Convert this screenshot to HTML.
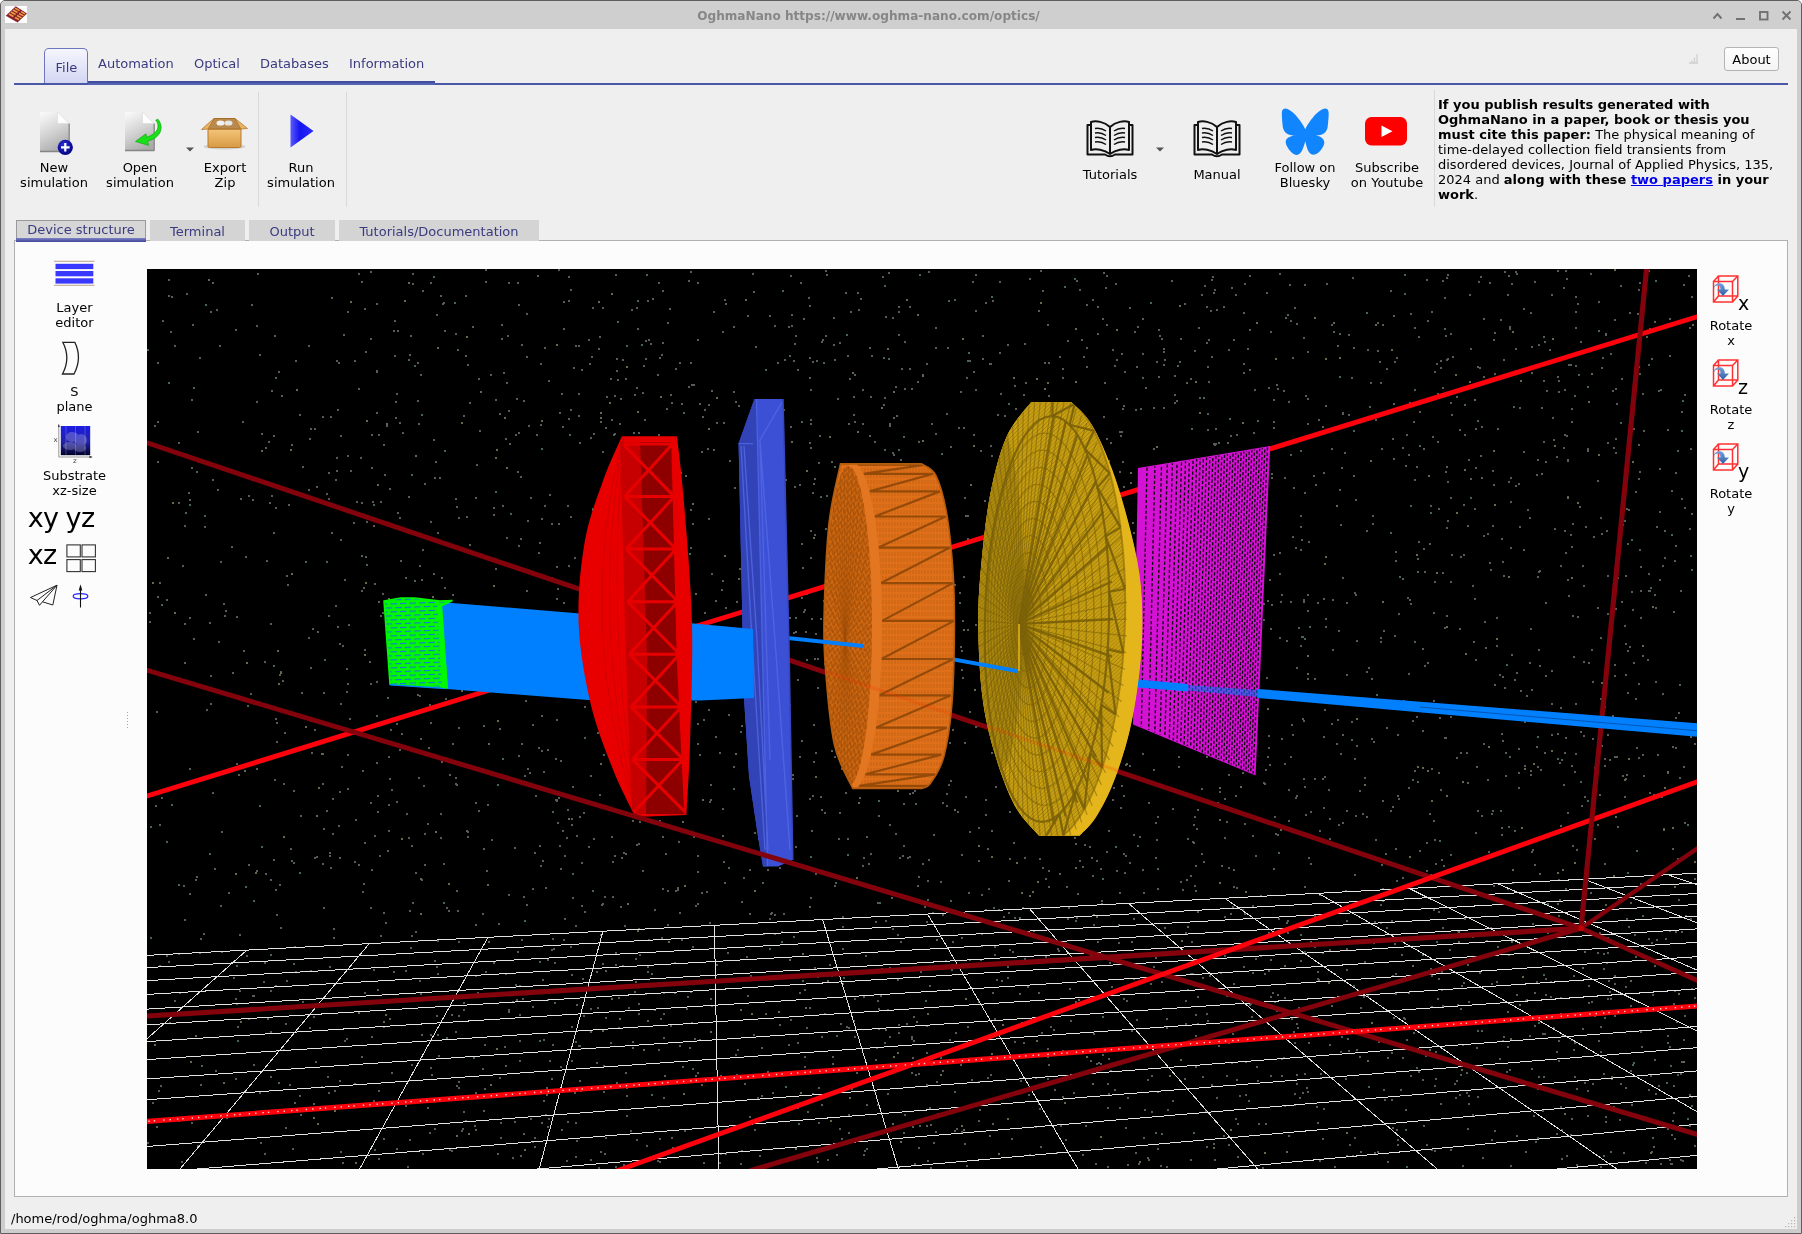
<!DOCTYPE html>
<html><head><meta charset="utf-8"><title>OghmaNano</title>
<style>
*{box-sizing:border-box;margin:0;padding:0}
html,body{width:1802px;height:1234px;overflow:hidden}html{background:#fff}
body{background:transparent;will-change:transform;font-family:"DejaVu Sans","Liberation Sans",sans-serif;font-size:13px;color:#000;position:relative}
.abs{position:absolute}
#win{position:absolute;left:0;top:0;width:1802px;height:1234px;background:#cdcdcd;border:1px solid #5e5e5e;border-radius:5px 5px 0 0}
#winin{position:absolute;left:5px;top:29px;width:1792px;height:1200px;background:#efefef}
#title{position:absolute;left:1px;top:1px;width:1800px;height:28px;background:#cfcfcf;border-radius:4px 4px 0 0;text-align:center;line-height:31px;font-weight:bold;color:#868686;font-size:12.1px;padding-right:65px}
.tab{position:absolute;top:56px;color:#3a3a80;font-size:13px;white-space:nowrap}
.tlab{position:absolute;text-align:center;font-size:13px;line-height:15px;white-space:nowrap;transform:translateX(-50%)}
.sep{position:absolute;width:1px;background:#d9d9d9}
.vtab{position:absolute;top:220px;height:21px;background:#d4d4d4;color:#3a3a80;text-align:center;line-height:23px;font-size:13px}
</style></head><body>
<div id="win"></div>
<div id="title">OghmaNano https://www.oghma-nano.com/optics/</div>
<div id="winin"></div>

<svg class="abs" style="left:5px;top:6px" width="22" height="17" viewBox="5 6 22 17"><rect x="5" y="6" width="22" height="17" fill="#fdfdfd"/><polygon points="5.800,15.700 15.700,6.200 27,13.500 17.500,22.600" fill="#8a1f2a"/><polygon points="6.500,16.500 17.300,22 17.500,22.600 5.800,15.700" fill="#b9a3a3"/><g stroke="#eaa040" stroke-width="1.500"><path d="M9,14 L13.500,16.500 M11,12 L15.500,14.500 M13,10 L17.500,12.500 M15,8.200 L19.500,10.700"/><path d="M15,17.500 L19,19.500 M17,15.500 L21.500,17.800 M19,13.500 L23.500,15.800 M21,11.700 L25,13.800"/></g></svg>
<svg class="abs" style="left:1708px;top:8px" width="90" height="16" viewBox="1708 8 90 16" fill="none" stroke="#727272" stroke-width="1.9"><path d="M1713.5,18.5 L1717.5,14 L1721.5,18.5"/><path d="M1736,19 H1745" stroke-width="2"/><rect x="1760" y="12" width="7.5" height="7.5"/><path d="M1782.5,11.5 L1790.5,19.5 M1790.5,11.5 L1782.5,19.5"/></svg>
<div class="abs" style="left:14px;top:83px;width:1774px;height:2px;background:#4b58a8"></div>
<div class="abs" style="left:88px;top:81px;width:347px;height:2px;background:#434d9e"></div><div class="abs" style="left:88px;top:83px;width:347px;height:2px;background:#5563b5"></div>
<div class="abs" style="left:44px;top:48px;width:44px;height:35px;border:1px solid #7076bc;border-bottom:none;border-radius:5px 5px 0 0;background:linear-gradient(#f6f6fd,#d3d6f3)"></div>
<div class="tab" style="left:55.5px;top:60px">File</div>
<div class="tab" style="left:98px">Automation</div>
<div class="tab" style="left:194px">Optical</div>
<div class="tab" style="left:260px">Databases</div>
<div class="tab" style="left:349px">Information</div>
<div class="abs" style="left:1724px;top:47px;width:55px;height:24px;border:1px solid #b4b4b4;border-radius:3px;background:linear-gradient(#fff,#f4f4f4);text-align:center;line-height:24px;font-size:13px">About</div>
<svg class="abs" style="left:1688px;top:53px" width="12" height="12" viewBox="0 0 12 12"><path d="M9,1 V10 M6.5,4.5 V10 M4,7.5 V10 M1,10 H10" stroke="#cfcfcf" stroke-width="1.3" fill="none"/></svg>


<svg class="abs" style="left:0;top:90px" width="1802" height="125" viewBox="0 90 1802 125">
<defs>
<linearGradient id="docg" x1="0.2" y1="0" x2="0.6" y2="1"><stop offset="0" stop-color="#f7f7f7"/><stop offset="0.5" stop-color="#d4d4d4"/><stop offset="1" stop-color="#ababab"/></linearGradient>
<linearGradient id="playg" x1="0" y1="0" x2="1" y2="0"><stop offset="0" stop-color="#5a5aff"/><stop offset="0.4" stop-color="#1515f0"/><stop offset="1" stop-color="#2a2aff"/></linearGradient>
<linearGradient id="boxg" x1="0" y1="0" x2="0" y2="1"><stop offset="0" stop-color="#f3c57a"/><stop offset="1" stop-color="#d89a45"/></linearGradient>
<radialGradient id="plusg" cx="0.4" cy="0.35" r="0.7"><stop offset="0" stop-color="#2d2dd8"/><stop offset="1" stop-color="#00007e"/></radialGradient>
</defs>
<!-- new sim -->
<path d="M40,112 H57.500 L69,123.500 V151 H40 Z" fill="url(#docg)"/><path d="M40,151.500 H69.500 M69.200,123.500 V151.500" stroke="#858585" stroke-width="1.300" fill="none"/>
<path d="M57.500,112 V123.500 H69 Z" fill="#fdfdfd" stroke="#d5d5d5" stroke-width="0.5"/>
<circle cx="65.3" cy="147.3" r="7.6" fill="url(#plusg)"/><path d="M61,147.3 H69.6 M65.3,143 V151.6" stroke="#fff" stroke-width="2.2"/>
<!-- open sim -->
<path d="M125,112 H142.500 L154,123.500 V150 H125 Z" fill="url(#docg)"/><path d="M125,150.500 H154.500 M154.200,123.500 V150.500" stroke="#858585" stroke-width="1.300" fill="none"/>
<path d="M142.500,112 V123.500 H154 Z" fill="#fdfdfd" stroke="#d5d5d5" stroke-width="0.5"/>
<path d="M155.800,120.200 C160.500,126 158,133.500 146.500,137.300 L146,133.800 L135.500,141.500 L148.500,145.300 L147.500,141.300 C162,137.500 164,126 157.800,119.200 Z" fill="#19e019" stroke="#10b010" stroke-width="0.800"/>
<path d="M186,147.5 H194 L190,151.5 Z" fill="#555"/>
<!-- export zip -->
<ellipse cx="224.5" cy="146.5" rx="21" ry="3" fill="#d0d0d0"/>
<path d="M208,129 H241 V146 Q241,147.5 239.500,147.5 H209.500 Q208,147.5 208,146 Z" fill="url(#boxg)" stroke="#b87a2c" stroke-width="1"/>
<path d="M208,129 L214,118.500 H235 L241,129 Z" fill="#b98a4e" stroke="#a86d24" stroke-width="1"/>
<ellipse cx="220.5" cy="123" rx="4" ry="2.600" fill="#f1f1f1"/><ellipse cx="228.500" cy="123" rx="4" ry="2.600" fill="#e6e6e6"/>
<path d="M208,129 L214,118.500 L207,124.500 L201.500,129.500 Z" fill="#e9b366" stroke="#b87a2c" stroke-width="0.8"/>
<path d="M241,129 L235,118.500 L242,124 L247.500,128.500 Z" fill="#e9b366" stroke="#b87a2c" stroke-width="0.8"/>
<!-- run -->
<path d="M290.500,114.500 L313.500,131 L290.500,147.500 Z" fill="url(#playg)"/>
<!-- books -->
<g id="book" fill="none" stroke="#111" stroke-width="2" stroke-linejoin="round">
<path d="M1110,127 C1104,121.500 1096,120.500 1091,122 V150 C1096,148.500 1104,149.500 1110,154 C1116,149.500 1124,148.500 1129,150 V122 C1124,120.500 1116,121.500 1110,127 Z M1110,127 V154"/>
<path d="M1091,125 H1087.500 V154.500 H1105 Q1110,158 1115,154.500 H1132.500 V125 H1129" />
<g stroke-width="1.500"><path d="M1095,128.500 Q1101,127.500 1106,131 M1095,133 Q1101,132 1106,135.500 M1095,137.500 Q1101,136.500 1106,140 M1095,142 Q1101,141 1106,144.500 M1125,128.500 Q1119,127.500 1114,131 M1125,133 Q1119,132 1114,135.500 M1125,137.500 Q1119,136.500 1114,140 M1125,142 Q1119,141 1114,144.500"/></g>
</g>
<use href="#book" x="107"/>
<path d="M1156,147.500 H1164 L1160,151.500 Z" fill="#555"/>
<!-- bluesky -->
<path transform="translate(1281.8,105.70) scale(1.9542,2.1750)" d="M12 10.8c-1.087-2.114-4.046-6.053-6.798-7.995C2.566.944 1.561 1.266.902 1.565.139 1.908 0 3.080 0 3.768c0 .69.378 5.650.624 6.479.815 2.736 3.713 3.660 6.383 3.364.136-.020.275-.039.415-.056-.138.022-.276.040-.415.056-3.912.580-7.387 2.005-2.830 7.078 5.013 5.190 6.870-1.113 7.823-4.308.953 3.195 2.050 9.271 7.733 4.308 4.267-4.308 1.172-6.498-2.740-7.078a8.741 8.741 0 0 1-.415-.056c.14.017.279.036.415.056 2.670.297 5.568-.628 6.383-3.364.246-.828.624-5.790.624-6.478 0-.690-.139-1.861-.902-2.206-.659-.298-1.664-.620-4.300 1.240C16.046 4.748 13.087 8.687 12 10.800Z" fill="#1185fe"/>
<!-- youtube -->
<rect x="1365" y="117" width="42" height="28.500" rx="6.500" fill="#ff0000"/><path d="M1381.500,125.500 L1392.500,131.200 L1381.500,137 Z" fill="#fff"/>
</svg>
<div class="sep" style="left:258px;top:92px;height:115px"></div>
<div class="sep" style="left:346px;top:92px;height:115px"></div>
<div class="sep" style="left:1434px;top:90px;height:117px"></div>
<div class="tlab" style="left:54px;top:160px">New<br>simulation</div>
<div class="tlab" style="left:140px;top:160px">Open<br>simulation</div>
<div class="tlab" style="left:225px;top:160px">Export<br>Zip</div>
<div class="tlab" style="left:301px;top:160px">Run<br>simulation</div>
<div class="tlab" style="left:1110px;top:167px">Tutorials</div>
<div class="tlab" style="left:1217px;top:167px">Manual</div>
<div class="tlab" style="left:1305px;top:160px">Follow on<br>Bluesky</div>
<div class="tlab" style="left:1387px;top:160px">Subscribe<br>on Youtube</div>
<div class="abs" style="left:1438px;top:97px;width:350px;font-size:13px;line-height:15px;white-space:nowrap"><b>If you publish results generated with<br>OghmaNano in a paper, book or thesis you<br>must cite this paper:</b> The physical meaning of<br>time-delayed collection field transients from<br>disordered devices, Journal of Applied Physics, 135,<br>2024 and <b>along with these <span style="color:#0000ee;text-decoration:underline;text-decoration-thickness:1.4px">two papers</span> in your<br>work</b>.</div>


<div class="abs" style="left:14px;top:240px;width:1774px;height:957px;background:#fcfcfc;border:1px solid #b0b0b0"></div>
<div class="vtab" style="left:16px;top:220px;width:130px;height:22px;border:1px solid #9a9a9a;border-bottom:none;line-height:18px;background:#d6d6d6">Device structure</div>
<div class="abs" style="left:16px;top:238px;width:130px;height:4px;background:linear-gradient(#7d82c8,#3f4496)"></div>
<div class="vtab" style="left:150px;width:95px">Terminal</div>
<div class="vtab" style="left:249px;width:86px">Output</div>
<div class="vtab" style="left:339px;width:200px">Tutorials/Documentation</div>

<svg class="abs" style="left:147px;top:269px" width="1550" height="900" viewBox="147 269 1550 900">
<rect x="147" y="269" width="1550" height="900" fill="#000"/>
<path d="M810 423h2M339 643h2M1186 488h2M1035 697h2M332 833h2M1305 395h2M1438 911h2M273 859h2M248 495h2M419 565h2M1254 389h2M1294 1104h2M358 864h2M531 650h2M1605 333h2M1414 479h2M1235 706h2M1100 868h2M887 575h2M515 984h2M314 857h2M1160 1165h2M1066 563h2M296 389h2M484 1044h2M1148 700h2M1515 348h2M1320 1077h2M789 617h2M1364 777h2M1081 339h2M699 754h2M781 931h2M1542 1110h2M1614 664h2M857 292h2M874 441h2M1158 329h2M735 401h2M961 669h2M1163 351h2M969 831h2M427 1107h2M1273 554h2M881 968h2M619 423h2M456 506h2M520 538h2M445 698h2M1395 848h2M1411 939h2M1540 1086h2M962 677h2M1133 918h2M1049 435h2M1377 322h2M1307 423h2M891 897h2M572 897h2M1446 527h2M1380 641h2M383 1138h2M1101 760h2M322 416h2M848 1027h2M1564 434h2M567 809h2M1560 825h2M1228 574h2M1208 644h2M875 1059h2M1256 1066h2M1450 497h2M546 1094h2M967 1026h2M556 799h2M1644 298h2M719 752h2M1565 888h2M1062 1096h2M862 642h2M356 501h2M838 478h2M1396 1129h2M1484 621h2M942 1070h2M555 758h2M1035 1077h2M1625 674h2M1669 355h2M495 399h2M1356 745h2M1118 942h2M466 830h2M1634 934h2M1681 411h2M545 1114h2M204 526h2M1173 515h2M814 534h2M871 738h2M1205 699h2M1174 402h2M1219 791h2M1048 1064h2M499 413h2M1632 392h2M814 967h2M1284 763h2M364 842h2M538 552h2M347 788h2M276 722h2M1182 889h2M1565 552h2M1239 1095h2M654 984h2M678 841h2M561 1129h2M1000 393h2M794 343h2M1024 343h2M767 1071h2M463 1002h2M896 415h2M428 747h2M477 992h2M1202 682h2M547 634h2M1625 643h2M1281 738h2M184 662h2M1424 571h2M615 1166h2M690 547h2M518 545h2M1011 1138h2M676 684h2M1201 853h2M816 360h2M1556 456h2M1446 359h2M1076 280h2M1279 696h2M695 905h2M1226 995h2M371 434h2M1434 581h2M568 565h2M1523 451h2M184 525h2M535 795h2M1062 377h2M1478 711h2M1265 1123h2M1184 584h2M617 619h2M1594 1015h2M975 624h2M412 283h2M1664 530h2M927 1160h2M724 882h2M747 315h2M469 544h2M686 641h2M1267 600h2M780 492h2M149 612h2M1119 554h2M558 523h2M157 362h2M330 416h2M232 672h2M770 913h2M1346 810h2M1368 667h2M1622 775h2M1630 902h2M1197 911h2M1582 1100h2M1219 1039h2M1603 968h2M1463 504h2M1290 320h2M1429 813h2M1149 539h2M1243 363h2M663 1097h2M690 509h2M567 505h2M1089 774h2M735 1054h2M1442 927h2M1375 419h2M1481 1030h2M1419 850h2M1134 331h2M1523 370h2M1530 770h2M1204 561h2M1102 1054h2M1271 473h2M322 753h2M1086 347h2M1067 544h2M578 345h2M437 1034h2M883 404h2M1440 789h2M377 989h2M1166 1166h2M197 431h2M1153 966h2M765 1013h2M851 654h2M825 270h2M839 1128h2M547 999h2M1662 565h2M280 671h2M1353 347h2M1023 1042h2M245 556h2M1502 561h2M1040 792h2M911 1072h2M966 1165h2M1271 477h2M248 1018h2M1406 1039h2M733 766h2M1273 399h2M996 620h2M670 1025h2M1483 535h2M635 577h2M1516 672h2M1464 434h2M1172 1100h2M597 732h2M1068 706h2M541 518h2M847 838h2M636 646h2M1313 475h2M1682 1160h2M994 1032h2M918 545h2M274 779h2M884 397h2M1230 913h2M589 363h2M655 662h2M1060 711h2M191 399h2M1600 1051h2M1116 870h2M1228 1144h2M1066 523h2M605 427h2M1543 380h2M1625 986h2M1083 356h2M623 852h2M1468 1001h2M409 910h2M1450 716h2M376 370h2M1221 865h2M681 497h2M1090 554h2M1467 1128h2M1120 807h2M652 298h2M1590 934h2M191 467h2M1528 931h2M673 502h2M905 501h2M1572 615h2M889 967h2M160 1085h2M1180 338h2M557 588h2M544 505h2M689 1047h2M370 907h2M530 497h2M1509 326h2M446 671h2M195 879h2M253 995h2M952 729h2M790 1019h2M309 438h2M1675 747h2M1507 1011h2M912 608h2M370 271h2M312 628h2M571 658h2M779 1110h2M547 650h2M1061 466h2M1657 754h2M988 522h2M975 310h2M1097 333h2M273 532h2M275 889h2M704 612h2M1410 313h2M1614 975h2M711 573h2M1694 878h2M1445 335h2M625 378h2M1100 1063h2M661 709h2M418 777h2M1659 579h2M456 890h2M801 740h2M1367 349h2M949 1039h2M982 335h2M1133 834h2M573 367h2M1600 726h2M419 695h2M1527 509h2M1507 1046h2M748 569h2M695 650h2M680 472h2M527 520h2M723 861h2M279 674h2M650 788h2M1477 1096h2M1097 306h2M1119 1107h2M1065 651h2M748 507h2M1341 467h2M909 793h2M1066 886h2M1508 275h2M1367 995h2M592 307h2M436 314h2M669 308h2M1481 477h2M817 687h2M526 904h2M563 301h2M1269 764h2M354 1083h2M1273 427h2M333 937h2M1571 546h2M727 952h2M878 693h2M892 928h2M1638 683h2M1014 385h2M978 860h2M1090 1060h2M1459 1094h2M329 855h2M906 1023h2M445 625h2M1214 444h2M369 661h2M551 577h2M236 763h2M1391 920h2M1605 904h2M475 924h2M601 904h2M548 1118h2M1304 492h2M1207 429h2M399 422h2M1631 1104h2M1523 308h2M810 389h2M1080 832h2M774 933h2M1340 524h2M1496 645h2M1044 452h2M1414 770h2M1062 1050h2M1085 1125h2M1116 678h2M410 636h2M334 1090h2M1191 941h2M1450 402h2M1649 590h2M1194 350h2M1179 655h2M1404 1018h2M371 467h2M1154 563h2M485 971h2M599 336h2M1397 1043h2M810 897h2M1081 416h2M1130 482h2M1408 787h2M909 306h2M973 434h2M716 964h2M918 441h2M688 386h2M1074 837h2M1557 376h2M1244 913h2M1658 1085h2M916 646h2M884 607h2M1052 504h2M1669 318h2M1203 528h2M1346 948h2M1648 270h2M600 421h2M1428 711h2M892 317h2M612 896h2M192 324h2M873 580h2M878 815h2M1342 577h2M565 644h2M1119 431h2M645 993h2M343 334h2M1509 1069h2M688 280h2M1298 627h2M1331 723h2M1207 1020h2M485 269h2M1235 294h2M633 432h2M361 281h2M1492 470h2M555 799h2M1185 932h2M1402 447h2M1630 1070h2M1249 275h2M1041 1032h2M682 506h2M1570 1134h2M1538 715h2M1218 540h2M591 356h2M178 442h2M630 1130h2M540 667h2M636 657h2M1438 978h2M1245 749h2M1233 983h2M625 853h2M581 669h2M443 302h2M853 414h2M210 311h2M1464 918h2M285 1023h2M1356 1049h2M1240 949h2M1694 997h2M366 521h2M376 303h2M1690 918h2M1685 915h2M1124 371h2M1470 478h2M836 702h2M865 531h2M804 1056h2M1178 756h2M1413 1032h2M992 300h2M348 624h2M1610 1151h2M1323 1108h2M1040 270h2M737 1049h2M257 273h2M524 775h2M1202 535h2M1579 506h2M1151 1075h2M1296 1074h2M815 633h2M955 1032h2M1469 294h2M767 538h2M1263 782h2M1438 508h2M406 813h2M1558 1040h2M1215 428h2M1069 946h2M809 442h2M1558 1060h2M620 398h2M1463 982h2M539 542h2M1587 1115h2M463 1009h2M654 1009h2M1216 625h2M818 462h2M1639 373h2M1494 373h2M1648 573h2M548 380h2M365 556h2M942 744h2M964 1143h2M1567 496h2M1442 572h2M437 532h2M975 274h2M1027 986h2M1681 931h2M615 952h2M1461 985h2M615 964h2M401 733h2M679 912h2M1006 517h2M1607 998h2M659 1138h2M1079 289h2M985 799h2M521 939h2M364 308h2M593 433h2M556 800h2M1323 736h2M1616 756h2M1456 1080h2M1215 620h2M1082 484h2M523 670h2M875 921h2M708 660h2M174 345h2M1008 912h2M868 863h2M606 579h2M1226 493h2M949 742h2M411 1064h2M1446 466h2M1298 1007h2M446 630h2M993 748h2M1269 934h2M1108 632h2M618 542h2M1554 528h2M1537 459h2M1625 1087h2M648 939h2M1129 765h2M1452 356h2M889 425h2M935 327h2M1303 601h2M1443 865h2M1490 569h2M354 861h2M625 459h2M856 1072h2M971 1079h2M1395 973h2M1270 1075h2M755 471h2M583 812h2M1045 956h2M1283 390h2M626 1115h2M1156 839h2M1103 416h2M651 779h2M1374 1152h2M475 1129h2M1572 845h2M754 1129h2M1019 697h2M1531 346h2M885 920h2M189 893h2M1655 607h2M339 791h2M442 303h2M998 909h2M340 1151h2M846 754h2M1281 1058h2M728 714h2M662 836h2M739 568h2M1158 682h2M703 1162h2M563 939h2M388 607h2M1607 575h2M1447 358h2M978 827h2M963 576h2M1119 892h2M270 1076h2M1260 895h2M448 910h2M1558 879h2M316 486h2M1444 737h2M503 372h2M1489 282h2M431 1074h2M1601 533h2M525 700h2M1331 324h2M1216 309h2M1009 858h2M975 726h2M1539 665h2M1497 428h2M991 830h2M1466 752h2M457 910h2M396 1148h2M395 401h2M711 1005h2M1070 1020h2M1608 980h2M1641 1046h2M1434 839h2M1090 954h2M667 322h2M170 331h2M1479 972h2M310 667h2M1640 883h2M1143 892h2M899 857h2M1109 962h2M482 913h2M1123 663h2M1074 547h2M1307 610h2M1587 1090h2M827 1159h2M178 1120h2M779 867h2M651 654h2M917 885h2M626 1095h2M1557 270h2M695 701h2M1318 419h2M1268 970h2M1170 624h2M1252 835h2M928 474h2M1626 508h2M264 962h2M1597 480h2M1347 1038h2M935 739h2M1245 1094h2M275 507h2M1214 534h2M1215 597h2M1353 475h2M540 363h2M1582 565h2M1302 636h2M1206 1146h2M238 774h2M364 649h2M314 428h2M209 622h2M1390 290h2M566 1160h2M1142 869h2M682 1066h2M1393 403h2M224 615h2M517 656h2M251 304h2M1592 738h2M960 391h2M331 532h2M624 925h2M1518 787h2M1065 1139h2M628 1007h2M1600 1026h2M1137 326h2M797 1042h2M554 962h2M1354 874h2M1483 376h2M908 532h2M914 761h2M1050 513h2M1534 281h2M546 1087h2M598 348h2M911 1036h2M1062 368h2M935 1131h2M807 1111h2M383 912h2M826 495h2M516 999h2M692 697h2M465 295h2M754 611h2M680 771h2M1081 763h2M1198 327h2M1515 485h2M733 391h2M559 642h2M682 513h2M346 668h2M748 416h2M845 792h2M1225 562h2M1038 310h2M594 552h2M429 1132h2M618 997h2M1377 350h2M1393 1017h2M707 448h2M1401 954h2M540 865h2M1211 686h2M833 557h2M1156 361h2M1123 405h2M692 523h2M898 306h2M907 857h2M1059 797h2M877 1000h2M804 1066h2M928 859h2M1643 775h2M422 290h2M328 498h2M490 374h2M1284 1105h2M1659 468h2M1374 921h2M1217 513h2M1615 452h2M399 745h2M1172 1048h2M396 393h2M427 823h2M611 419h2M1093 1033h2M184 919h2M1008 880h2M1223 306h2M253 1064h2M967 515h2M1612 715h2M1302 1092h2M803 1103h2M1296 323h2M657 1160h2M1442 280h2M1234 460h2M1033 474h2M189 499h2M960 1064h2M1076 917h2M1418 541h2M1423 548h2M220 905h2M396 801h2M631 309h2M772 624h2M393 330h2M1199 543h2M1355 815h2M1048 395h2M748 685h2M708 518h2M1663 828h2M1077 893h2M600 934h2M1270 996h2M1269 579h2M1107 1107h2M643 610h2M1196 828h2M1346 674h2M869 435h2M635 600h2M1153 545h2M589 571h2M1387 1161h2M1494 332h2M1047 631h2M370 802h2M1534 1025h2M1000 614h2M434 960h2M1397 1139h2M1207 366h2M1669 1046h2M697 1072h2M1441 989h2M358 273h2M1273 868h2M961 854h2M719 1162h2M1565 737h2M869 568h2M1224 837h2M1474 598h2M1674 1138h2M926 723h2M1246 580h2M1039 858h2M622 359h2M823 600h2M1392 1127h2M814 478h2M168 295h2M1303 778h2M1245 1061h2M1416 716h2M1206 1013h2M944 744h2M1364 961h2M168 961h2M616 370h2M1172 679h2M1322 426h2M1009 767h2M1426 870h2M1232 1033h2M496 640h2M300 1114h2M506 382h2M750 975h2M1189 699h2M1220 565h2M572 786h2M991 455h2M1304 886h2M1314 915h2M233 977h2M1279 273h2M961 1131h2M178 953h2M505 778h2M1308 541h2M1235 795h2M1323 472h2M395 417h2M1190 378h2M1151 1111h2M1028 1094h2M1478 281h2M1332 599h2M634 631h2M1339 333h2M1068 907h2M1340 1051h2M1047 324h2M657 497h2M1349 1144h2M768 697h2M1161 338h2M945 960h2M600 692h2M1604 765h2M645 358h2M880 657h2M742 674h2M382 612h2M936 612h2M281 395h2M866 836h2M538 747h2M632 715h2M1507 294h2M466 516h2M336 470h2M408 837h2M638 432h2M590 1008h2M1435 863h2M1121 785h2M1074 960h2M1593 536h2M1048 870h2M1241 521h2M1191 486h2M1684 394h2M1654 1059h2M444 587h2M1602 357h2M621 597h2M370 338h2M887 1093h2M755 466h2M784 359h2M405 1105h2M725 633h2M1098 1062h2M1434 1150h2M713 449h2M1538 1087h2M866 691h2M1588 985h2M967 629h2M347 455h2M701 892h2M1606 962h2M228 892h2M552 1044h2M926 1025h2M783 913h2M514 847h2M1314 778h2M668 714h2M1325 626h2M1489 562h2M1345 890h2M647 966h2M799 484h2M854 1036h2M1001 980h2M1678 899h2M722 808h2M1015 722h2M1563 784h2M1433 909h2M1024 958h2M1292 536h2M482 1068h2M1260 535h2M268 441h2M990 363h2M783 409h2M1594 767h2M634 991h2M1202 977h2M1459 628h2M420 993h2M1300 515h2M388 830h2M493 962h2M1373 741h2M978 1120h2M1560 565h2M1143 480h2M722 580h2M1583 585h2M378 434h2M1106 851h2M491 839h2M1683 766h2M1615 608h2M1301 539h2M1148 713h2M1259 598h2M333 928h2M1403 1017h2M661 937h2M430 1034h2M956 1128h2M900 459h2M1223 1135h2M1543 441h2M1619 1119h2M1410 603h2M1472 1114h2M618 646h2M903 1126h2M637 328h2M1307 1091h2M1592 681h2M590 775h2M1643 430h2M1381 864h2M437 973h2M430 722h2M969 360h2M1047 759h2M1627 650h2M1397 1144h2M1194 704h2M294 946h2M1602 700h2M275 718h2M508 1011h2M752 273h2M1300 960h2M547 749h2M809 798h2M1242 909h2M968 892h2M1394 943h2M1316 700h2M1131 941h2M759 1155h2M1444 297h2M602 963h2M1562 356h2M1332 649h2M999 637h2M1303 720h2M380 501h2M562 830h2M600 1151h2M1477 366h2M1519 526h2M611 836h2M1255 855h2M1653 794h2M1307 351h2M1538 344h2M422 1153h2M1185 1000h2M1624 796h2M1551 670h2M539 845h2M337 409h2M1414 327h2M243 650h2M1584 877h2M1088 576h2M559 845h2M1638 1160h2M898 1032h2M1654 965h2M670 394h2M1197 1023h2M878 1008h2M1383 630h2M1271 604h2M1529 517h2M542 979h2M1337 719h2M189 768h2M676 458h2M740 1163h2M926 1125h2M659 820h2M697 723h2M848 423h2M1138 1163h2M219 345h2M1467 964h2M1121 431h2M1065 671h2M1398 798h2M821 809h2M415 872h2M579 442h2M1636 747h2M1106 666h2M790 275h2M1137 610h2M656 739h2M1393 315h2M1635 956h2M934 548h2M683 634h2M1228 867h2M1577 303h2M342 1162h2M1019 917h2M634 1162h2M436 966h2M846 1026h2M1447 520h2M1274 1001h2M270 990h2M808 1070h2M899 518h2M862 423h2M976 725h2M766 441h2M441 577h2M663 1013h2M1496 617h2M1344 452h2M870 748h2M1560 707h2M285 1127h2M1266 292h2M1429 543h2M188 492h2M1064 474h2M725 1153h2M350 470h2M1325 618h2M157 461h2M1462 1165h2M808 297h2M816 1157h2M1476 766h2M1537 1088h2M264 1153h2M832 1063h2M1371 678h2M1095 1163h2M795 846h2M788 326h2M1601 1010h2M467 364h2M578 415h2M1013 621h2M1352 1155h2M1493 885h2M618 1027h2M1604 758h2M1472 585h2M1272 992h2M716 639h2M708 404h2M1290 756h2M889 423h2M614 679h2M331 297h2M397 330h2M566 837h2M677 889h2M478 810h2M1600 517h2M1168 487h2M851 1088h2M581 600h2M969 959h2M269 502h2M986 653h2M1431 1149h2M662 290h2M1035 516h2M563 602h2M1463 554h2M1168 490h2M694 1038h2M761 558h2M658 434h2M1396 880h2M581 862h2M576 1140h2M885 316h2M1046 455h2M433 573h2M455 783h2M346 1038h2M1545 675h2M842 926h2M1614 675h2M214 868h2M1431 975h2M423 785h2M1324 709h2M1638 289h2M795 335h2M1223 707h2M605 970h2M1443 1024h2M377 811h2M1163 348h2M605 1017h2M1587 450h2M697 339h2M549 789h2M1286 640h2M814 973h2M1076 826h2M824 975h2M1673 1003h2M1011 594h2M931 423h2M936 688h2M1447 274h2M1173 529h2M1642 655h2M553 948h2M1418 1071h2M1614 319h2M1290 601h2M1053 831h2M1079 860h2M1675 931h2M1191 619h2M925 509h2M1669 1159h2M1605 334h2M1224 541h2M1533 1115h2M1434 1085h2M604 896h2M684 1130h2M1624 625h2M1123 853h2M1229 641h2M1227 442h2M635 958h2M1502 740h2M1482 1157h2M806 659h2M1023 394h2M1585 526h2M894 634h2M1217 802h2M1503 359h2M741 725h2M1067 918h2M504 1046h2M159 965h2M1148 802h2M1422 648h2M927 527h2M558 269h2M265 873h2M1617 826h2M810 530h2M1044 362h2M1157 1148h2M741 901h2M236 1003h2M898 311h2M751 686h2M1391 1099h2M635 663h2M412 902h2M1604 863h2M1510 477h2M924 671h2M1164 927h2M1094 742h2M1040 693h2M507 335h2M1153 407h2M166 955h2M557 680h2M1539 570h2M940 1057h2M1316 1106h2M1164 359h2M588 846h2M1541 473h2M1135 1152h2M1562 1034h2M1342 412h2M803 611h2M709 801h2M788 661h2M758 838h2M1007 966h2M770 523h2M1040 1146h2M771 475h2M571 818h2M1097 941h2M1342 413h2M846 474h2M1594 838h2M1640 590h2M809 305h2M1046 567h2M1397 734h2M1637 724h2M563 328h2M1456 396h2M294 1102h2M1296 1023h2M1167 495h2M1529 1035h2M579 816h2M570 797h2M250 693h2M674 992h2M1551 703h2M263 981h2M474 1125h2M623 1164h2M799 992h2M811 830h2M458 1087h2M817 658h2M743 497h2M1568 364h2M451 1014h2M829 964h2M226 1117h2M1493 484h2M1220 807h2M1150 625h2M1163 364h2M720 1153h2M1342 822h2M559 412h2M612 861h2M149 621h2M458 941h2M499 610h2M1132 522h2M892 452h2M757 1097h2M1292 734h2M1276 384h2M1366 671h2M216 309h2M346 691h2M417 694h2M869 347h2M1505 1020h2M826 274h2M1130 579h2M386 425h2M1244 823h2M1105 520h2M1243 312h2M898 471h2M1284 477h2M638 1013h2M1174 514h2M1147 1079h2M1315 484h2M616 358h2M461 1130h2M210 703h2M1208 381h2M394 355h2M592 508h2M1197 996h2M650 343h2M347 311h2M1563 447h2M847 355h2M1092 875h2M990 1074h2M327 1076h2M1649 792h2M456 1085h2M434 477h2M596 971h2M1129 307h2M822 339h2M1450 333h2M1427 320h2M989 363h2M862 865h2M1155 957h2M1163 407h2M1567 579h2M1672 746h2M1539 873h2M937 1113h2M1197 575h2M1362 813h2M1442 387h2M663 1037h2M622 514h2M1084 844h2M1155 857h2M1550 996h2M1506 1071h2M1430 968h2M848 1114h2M842 948h2M1020 1080h2M762 769h2M373 1100h2M988 888h2M445 612h2M317 631h2M1101 903h2M834 359h2M981 945h2M642 392h2M1431 311h2M524 668h2M456 640h2M866 1104h2M954 584h2M1184 1078h2M534 1146h2M479 669h2M147 1142h2M650 734h2M1492 525h2M1531 372h2M1651 1151h2M1511 654h2M1689 528h2M1056 541h2M888 581h2M1441 971h2M1216 1097h2M1487 779h2M1563 287h2M1546 390h2M1063 587h2M458 1015h2M1086 304h2M1135 409h2M702 416h2M1328 789h2M950 446h2M1460 556h2M642 567h2M981 933h2M1532 923h2M1600 637h2M715 600h2M1324 776h2M1237 624h2M558 797h2M273 435h2M1213 443h2M256 870h2M931 1064h2M1567 460h2M1119 471h2M1044 681h2M679 639h2M936 1081h2M693 384h2M1422 730h2M983 921h2M791 314h2M1244 750h2M1520 690h2M710 670h2M957 811h2M1437 393h2M1576 849h2M1380 637h2M645 340h2M344 1040h2M992 1123h2M374 583h2M508 1009h2M1564 389h2M954 1130h2M1667 1128h2M950 780h2M863 1154h2M440 813h2M994 954h2M738 405h2M1543 336h2M283 783h2M1322 952h2M1032 682h2M1639 549h2M1538 1076h2M418 423h2M1691 513h2M725 303h2M1475 659h2M415 931h2M1588 662h2M710 998h2M1382 888h2M706 891h2M605 585h2M1531 851h2M308 637h2M1206 342h2M812 492h2M1435 1051h2M710 784h2M1059 873h2M1104 382h2M749 913h2M824 812h2M593 838h2M574 557h2M1329 818h2M603 1065h2M1180 543h2M276 914h2M330 867h2M946 793h2M984 500h2M259 1092h2M1235 606h2M662 342h2M1325 405h2M1545 994h2M537 618h2M376 681h2M544 347h2M1204 285h2M551 1078h2M549 1060h2M1294 1042h2M753 1034h2M1620 285h2M568 696h2M1460 1008h2M1248 539h2M1432 436h2M793 632h2M237 1026h2M874 700h2M1607 734h2M849 378h2M892 1065h2M1142 353h2M799 756h2M409 1139h2M1300 526h2M575 631h2M1209 716h2M1633 662h2M1041 406h2M1235 657h2M564 855h2M292 1148h2M1426 842h2M1139 1056h2M568 276h2M873 660h2M556 719h2M1346 920h2M1047 1048h2M1630 1005h2M1110 442h2M1525 1151h2M638 1003h2M1564 752h2M389 778h2M275 985h2M615 274h2M1673 1112h2M1659 1028h2M643 365h2M556 1090h2M1102 318h2M596 1062h2M1286 922h2M994 538h2M1105 287h2M1601 367h2M1230 435h2M809 377h2M928 271h2M322 783h2M1402 877h2M1247 348h2M1501 827h2M1083 675h2M1293 1031h2M530 1118h2M1084 482h2M1478 1022h2M1025 382h2M323 828h2M1534 365h2M636 1139h2M354 360h2M766 585h2M449 774h2M832 1056h2M308 345h2M1545 978h2M585 801h2M981 894h2M578 1045h2M1614 1015h2M1541 407h2M1029 1089h2M1051 530h2M664 1075h2M860 298h2M340 435h2M1486 940h2M1423 1125h2M1683 1039h2M658 282h2M189 617h2M877 1104h2M636 619h2M1236 434h2M789 704h2M898 334h2M1085 433h2M648 686h2M1209 975h2M1440 360h2M593 563h2M174 1000h2M1612 390h2M508 894h2M1553 439h2M1674 560h2M655 618h2M575 925h2M1490 927h2M437 940h2M286 980h2M1244 283h2M299 414h2M1626 774h2M1192 973h2M1068 451h2M669 579h2M1573 975h2M1638 366h2M1090 619h2M568 300h2M610 378h2M865 955h2M1426 279h2M295 360h2M1497 946h2M1501 538h2M441 761h2M264 661h2M329 852h2M274 335h2M696 1142h2M874 641h2M508 410h2M1656 526h2M487 804h2M655 1084h2M926 1052h2M1475 467h2M933 1142h2M1460 752h2M162 320h2M919 1125h2M724 299h2M1145 387h2M1284 997h2M975 389h2M502 505h2M271 390h2M691 638h2M636 615h2M293 790h2M1671 490h2M917 381h2M1031 806h2M1215 443h2M794 486h2M1124 540h2M1090 1072h2M299 1095h2M797 369h2M1504 1077h2M1133 532h2M1201 294h2M1553 1027h2M1474 508h2M1507 888h2M893 417h2M806 1027h2M900 941h2M519 985h2M1371 738h2M314 729h2M220 561h2M434 1128h2M1680 590h2M282 680h2M485 281h2M1138 507h2M912 792h2M1667 772h2M581 905h2M541 1122h2M781 1072h2M610 1042h2M980 450h2M1516 994h2M912 1057h2M675 890h2M1297 830h2M428 536h2M424 864h2M1689 327h2M1012 440h2M1073 1077h2M1314 946h2M455 1031h2M1605 686h2M1039 1108h2M182 565h2M1690 448h2M1007 344h2M761 1095h2M1592 794h2M1060 518h2M1233 869h2M903 803h2M541 715h2M665 853h2M1564 530h2M990 644h2M674 962h2M1582 1028h2M1544 752h2M818 1087h2M1058 755h2M1599 932h2M1100 601h2M623 709h2M571 824h2M421 1034h2M1652 994h2M1505 775h2M408 496h2M691 384h2M425 684h2M1470 348h2M1077 609h2M875 622h2M1042 591h2M1133 978h2M1531 1068h2M904 388h2M745 1124h2M564 918h2M1359 1056h2M763 933h2M279 884h2M1510 1165h2M1366 816h2M1295 547h2M156 1126h2M1572 523h2M617 447h2M1603 1073h2M186 293h2M328 472h2M833 344h2M802 567h2M1127 1164h2M259 354h2M690 362h2M820 618h2M435 461h2M1294 1093h2M462 1128h2M935 571h2M616 587h2M1114 365h2M1073 1092h2M620 906h2M1505 752h2M430 282h2M1339 489h2M1445 737h2M676 782h2M1238 608h2M599 794h2M1457 1004h2M1405 465h2M681 403h2M610 743h2M1588 1002h2M1584 1082h2M959 592h2M774 325h2M793 360h2M812 795h2M1092 299h2M391 1072h2M1214 1159h2M1614 756h2M1424 665h2M1198 496h2M1123 998h2M1591 649h2M1631 591h2M361 1056h2M1451 554h2M1288 401h2M1547 903h2M1493 339h2M1499 1058h2M1211 356h2M1575 365h2M1654 321h2M1519 407h2M1580 341h2M1236 887h2M493 514h2M1019 993h2M399 517h2M1277 388h2M1663 1006h2M1115 500h2M1384 1099h2M1099 671h2M1650 1075h2M543 771h2M1197 615h2M1571 421h2M1407 597h2M1640 1031h2M1545 461h2M262 1110h2M621 857h2M667 890h2M223 603h2M797 1107h2M896 577h2M869 672h2M372 501h2M1531 689h2M1308 1042h2M1466 1092h2M1638 444h2M775 528h2M814 658h2M775 405h2M1607 613h2M500 1137h2M1671 1163h2M1483 318h2M1268 735h2M1110 1070h2M1680 1159h2M1640 617h2M278 371h2M200 1084h2M904 341h2M1166 1027h2M1093 924h2M1123 656h2M1441 859h2M853 1020h2M1660 1163h2M363 883h2M1208 339h2M999 281h2M1510 501h2M889 824h2M1496 981h2M1488 851h2M1357 851h2M1616 403h2M336 457h2M1202 1076h2M1383 1089h2M898 1024h2M926 921h2M1000 475h2M820 796h2M529 772h2M1171 280h2M1296 1083h2M378 1158h2M256 325h2M1610 998h2M1193 742h2M1293 487h2M1439 717h2M1015 408h2M677 887h2M1007 490h2M1106 324h2M158 1090h2M1615 438h2M632 820h2M1205 1110h2M1381 448h2M560 868h2M371 1036h2M1363 996h2M1016 792h2M289 1084h2M997 414h2M498 923h2M1259 613h2M1624 520h2M613 434h2M877 902h2M781 434h2M1059 356h2M1354 592h2M753 457h2M1047 1056h2M1142 753h2M1112 799h2M1359 790h2M493 507h2M1583 661h2M973 371h2M1017 612h2M1561 1129h2M1319 830h2M1638 757h2M1437 998h2M969 711h2M467 836h2M1676 1021h2M1552 417h2M1535 1141h2M815 873h2M596 617h2M467 831h2M1480 455h2M1409 599h2M1049 776h2M1214 289h2M1236 1079h2M1456 757h2M668 665h2M1304 1073h2M1433 820h2M827 563h2M475 975h2M302 466h2M1655 1093h2M784 502h2M1041 539h2M1621 378h2M1275 833h2M1035 1126h2M1679 777h2M937 701h2M1598 1040h2M405 577h2M261 433h2M1437 441h2M478 378h2M1394 635h2M552 638h2M1036 602h2M665 725h2M505 438h2M458 1081h2M1656 939h2M1232 906h2M215 1070h2M1326 283h2M1499 674h2M449 1149h2M1295 797h2M505 973h2M1561 930h2M1584 796h2M888 693h2M534 852h2M1504 687h2M1129 862h2M1406 434h2M918 464h2M579 1080h2M1405 1109h2M1334 973h2M1462 1044h2M1398 613h2M1265 769h2M242 421h2M316 856h2M749 869h2M1590 273h2M420 374h2M1051 1012h2M313 1016h2M901 368h2M1625 575h2M1487 533h2M905 479h2M1172 808h2M1317 978h2M715 736h2M797 679h2M1575 753h2M1538 571h2M1254 1023h2M415 629h2M918 1147h2M1184 303h2M199 357h2M217 489h2M1107 1166h2M1640 566h2M1393 458h2M1468 1103h2M1468 459h2M680 613h2M603 754h2M605 525h2M271 495h2M1402 578h2M276 914h2M1426 1144h2M581 369h2M1108 1093h2M270 1031h2M1483 743h2M1232 469h2M475 802h2M1281 594h2M1108 773h2M1300 645h2M1165 1049h2M819 435h2M342 645h2M376 412h2M725 607h2M1268 451h2M205 594h2M400 560h2M903 845h2M1550 981h2M1445 471h2M1508 954h2M532 888h2M747 995h2M1348 334h2M576 835h2M1201 788h2M1689 1125h2M373 969h2M1607 952h2M247 705h2M721 589h2M1566 278h2M863 996h2M517 282h2M514 1121h2M578 393h2M1661 796h2M1529 662h2M1575 296h2M1575 703h2M1675 545h2M1023 641h2M1022 907h2M935 433h2M895 833h2M904 530h2M479 430h2M402 432h2M1308 857h2M1163 691h2M1683 284h2M630 701h2M878 516h2M1124 872h2M834 756h2M636 307h2M517 471h2M315 1061h2M328 615h2M1014 1041h2M1195 1066h2M647 971h2M772 711h2M364 992h2M486 870h2M1667 429h2M266 560h2M833 317h2M1667 1035h2M1192 683h2M1518 483h2M1501 733h2M1103 272h2M1502 676h2M982 358h2M736 642h2M692 946h2M602 307h2M1556 1133h2M465 355h2M1259 465h2M1434 371h2M1540 769h2M1299 1097h2M1116 398h2M1137 716h2M1551 294h2M1331 1005h2M1611 1078h2M378 1090h2M1627 543h2M1571 1118h2M1605 1116h2M1043 717h2M417 362h2M1029 1154h2M1615 388h2M926 363h2M154 425h2M871 355h2M1355 594h2M1680 1073h2M1351 721h2M1466 1072h2M1305 814h2M1209 478h2M837 398h2M1192 841h2M602 903h2M1176 400h2M1004 709h2M526 313h2M711 390h2M1588 725h2M1206 756h2M1193 824h2M741 569h2M1598 301h2M1135 597h2M583 1015h2M880 995h2M883 357h2M1648 938h2M625 1072h2M1652 961h2M897 979h2M1270 331h2M985 302h2M1392 806h2M772 1092h2M844 614h2M1620 1083h2M527 768h2M235 998h2M841 1138h2M1046 564h2M790 426h2M522 998h2M722 331h2M649 608h2M501 324h2M540 424h2M914 790h2M703 719h2M1366 530h2M949 668h2M169 1022h2M804 609h2M570 289h2M1319 894h2M639 507h2M1323 598h2M1317 602h2M1379 361h2M397 512h2M784 695h2M178 502h2M965 515h2M1012 518h2M639 655h2M1211 1084h2M769 544h2M1609 759h2M1093 502h2M505 1065h2M1108 830h2M679 1045h2M1048 362h2M582 978h2M338 362h2M156 711h2M1079 565h2M859 797h2M1607 442h2M1228 774h2M741 1150h2M598 1167h2M834 885h2M1300 549h2M903 1132h2M1491 813h2M428 605h2M380 615h2M193 638h2M551 949h2M885 684h2M499 1077h2M1649 328h2M596 597h2M1530 312h2M1114 1089h2M501 338h2M1567 459h2M1467 782h2M1402 1057h2M1190 1159h2M1274 816h2M1136 1019h2M422 549h2M1536 474h2M1410 1075h2M1317 1122h2M1053 1029h2M1307 398h2M892 774h2M483 1110h2M365 351h2M1195 1014h2M1213 292h2M617 719h2M1557 733h2M520 476h2M1446 615h2M416 613h2M394 320h2M746 956h2M1651 358h2M1048 886h2M722 835h2M267 1018h2M777 362h2M1501 834h2M1377 1151h2M929 985h2M918 1073h2M549 494h2M1672 1120h2M419 980h2M240 498h2M1047 1078h2M1191 625h2M1673 1085h2M878 679h2M858 777h2M1494 684h2M1113 787h2M552 938h2M870 853h2M340 539h2M1448 393h2M918 876h2M592 592h2M667 1081h2M1277 834h2M1429 397h2M495 568h2M1038 1103h2M1526 999h2M534 1137h2M990 445h2M452 594h2M1035 666h2M536 434h2M1248 466h2M1178 766h2M181 1161h2M355 819h2M774 914h2M614 855h2M857 649h2M280 927h2M775 426h2M1648 1089h2M1319 1160h2M551 523h2M670 527h2M685 770h2M604 649h2M1627 692h2M604 1153h2M821 1036h2M1574 771h2M608 483h2M788 1044h2M1481 815h2M786 696h2M1195 1035h2M1042 867h2M1121 550h2M979 1109h2M1500 319h2M1091 857h2M1288 789h2M310 970h2M1029 278h2M1431 768h2M541 750h2M761 713h2M1638 478h2M952 941h2M753 291h2M1621 601h2M621 613h2M246 955h2M235 1078h2M1264 973h2M286 575h2M1629 646h2M1408 673h2M1662 693h2M388 804h2M1144 723h2M1038 502h2M556 598h2M1605 1121h2M1210 1042h2M371 869h2M1066 537h2M562 426h2M1395 551h2M1382 800h2M634 394h2M999 352h2M1057 948h2M767 869h2M370 683h2M1613 1106h2M915 641h2M1116 359h2M456 784h2M313 1103h2M545 887h2M1000 720h2M640 589h2M983 581h2M376 371h2M1318 979h2M1623 1152h2M1164 565h2M1042 290h2M1346 602h2M709 922h2M1162 617h2M382 593h2M1178 567h2M912 522h2M1197 549h2M1372 515h2M1099 532h2M1400 1089h2M1268 932h2M1289 284h2M1587 448h2M1559 899h2M964 742h2M1479 367h2M360 457h2M1477 810h2M949 669h2M547 652h2M1297 1027h2M732 681h2M965 796h2M946 413h2M838 838h2M302 1001h2M500 1122h2M695 1075h2M827 588h2M523 1133h2M509 443h2M1310 811h2M836 1154h2M463 415h2M605 1137h2M738 578h2M1038 494h2M915 1074h2M614 681h2M196 876h2M1600 698h2M1179 361h2M734 487h2M909 856h2M1571 765h2M963 427h2M1094 541h2M476 464h2M1320 1073h2M1433 612h2M543 1100h2M1545 602h2M1172 649h2M225 610h2M1669 930h2M708 709h2M1059 729h2M1307 594h2M1557 903h2M1534 992h2M424 483h2M831 461h2M1637 725h2M265 447h2M284 732h2M1131 1030h2M323 692h2M430 1067h2M988 512h2M1438 772h2M166 599h2M1030 476h2M171 296h2M260 1142h2M1150 983h2M912 1126h2M922 863h2M932 912h2M1418 336h2M1226 653h2M347 683h2M1166 1018h2M1180 881h2M1645 882h2M769 315h2M1009 949h2M1515 271h2M653 628h2M922 374h2M1382 900h2M775 825h2M1307 678h2M1306 1087h2M206 709h2M1278 918h2M446 907h2M769 918h2M239 990h2M1511 283h2M1600 1166h2M647 300h2M484 1088h2M1647 659h2M1674 990h2M1387 1057h2M1348 414h2M353 522h2M936 623h2M1065 448h2M738 648h2M701 1084h2M1542 1033h2M821 341h2M421 579h2M1088 788h2M1144 1109h2M462 1098h2M675 368h2M519 1060h2M1215 1121h2M818 1122h2M526 590h2M951 969h2M1532 849h2M662 888h2M458 517h2M560 1066h2M159 582h2M1664 557h2M1536 746h2M1253 432h2M337 626h2M515 434h2M1688 275h2M1514 679h2M652 733h2M985 909h2M210 675h2M642 870h2M1609 624h2M1235 639h2M407 1166h2M746 697h2M1660 389h2M813 724h2M1454 1083h2M924 906h2M390 729h2M1056 1152h2M1159 533h2M621 783h2M1459 429h2M537 275h2M930 1124h2M849 654h2M1287 920h2M777 689h2M736 601h2M1105 563h2M1354 758h2M1419 411h2M667 924h2M1164 652h2M584 706h2M1106 689h2M1576 1088h2M336 360h2M600 586h2M996 649h2M1551 734h2M895 667h2M287 584h2M1341 1036h2M994 946h2M1003 916h2M1430 874h2M1019 606h2M792 774h2M570 946h2M472 326h2M308 489h2M758 721h2M985 814h2M1646 336h2M571 974h2M765 639h2M1280 601h2M606 396h2M1144 601h2M1655 681h2M718 649h2M624 542h2M518 432h2M1075 1001h2M421 879h2M951 1049h2M1523 549h2M1455 1097h2M831 662h2M800 282h2M1561 1158h2M1442 1005h2M1169 506h2M598 574h2M1444 627h2M1125 855h2M1573 656h2M942 914h2M792 778h2M1475 832h2M1108 1058h2M815 752h2M1570 534h2M1556 1051h2M1054 1089h2M1516 1135h2M1242 772h2M1639 471h2M962 620h2M754 625h2M542 860h2M994 1018h2M911 1038h2M344 579h2M1201 692h2M1078 559h2M1536 981h2M850 530h2M1639 282h2M616 597h2M1028 538h2M779 557h2M704 409h2M385 922h2M391 789h2M659 357h2M1060 779h2M1224 798h2M1629 312h2M1422 1079h2M518 755h2M1392 975h2M654 521h2M1581 805h2M1243 966h2M864 1150h2M1509 328h2M1430 505h2M1122 461h2M850 311h2M862 389h2M1197 809h2M1440 367h2M451 1150h2M768 491h2M831 750h2M1127 615h2M571 1060h2M1153 769h2M1264 783h2M1681 498h2M1628 926h2M1549 349h2M1684 822h2M1427 662h2M1094 751h2M848 577h2M198 461h2M1534 864h2M1636 334h2M1637 313h2M1045 878h2M665 550h2M987 848h2M231 546h2M571 1026h2M644 419h2M1449 949h2M699 403h2M888 272h2M1575 327h2M1645 1162h2M1571 408h2M1153 448h2M1196 682h2M1007 553h2M636 387h2M1473 641h2M1194 816h2M1207 489h2M335 605h2M614 395h2M518 304h2M1125 764h2M1491 983h2M579 1045h2M1684 1015h2M440 837h2M1096 1063h2M574 1092h2M389 1018h2M1673 611h2M1203 861h2M1547 932h2M697 871h2M1329 1044h2M256 401h2M1433 700h2M638 843h2M1206 669h2M682 649h2M1394 361h2M809 1007h2M1162 728h2M392 644h2M1304 284h2M252 995h2M1099 958h2M640 728h2M1576 1164h2M1108 723h2M625 459h2M895 386h2M1591 1001h2M444 330h2M588 339h2M1058 950h2M1409 402h2M1352 277h2M658 784h2M1642 393h2M1047 619h2M812 361h2M519 1014h2M824 1013h2M817 1161h2M373 525h2M1423 448h2M848 1132h2M401 598h2M497 1153h2M1413 421h2M1202 542h2M1346 969h2M1633 428h2M1583 718h2M1392 438h2M1056 403h2M1632 609h2M771 682h2M958 427h2M1467 525h2M1222 610h2M927 547h2M1090 794h2M570 409h2M835 966h2M690 271h2M1678 712h2M679 362h2M754 832h2M1372 523h2M720 1075h2M1574 1076h2M1672 848h2M379 855h2M483 848h2M1228 349h2M1346 1155h2M642 769h2M1689 1094h2M671 1137h2M961 937h2M1279 573h2M1675 472h2M1386 927h2M810 557h2M1396 357h2M863 857h2M1039 616h2M654 909h2M1436 941h2M751 452h2M374 835h2M642 645h2M1122 408h2M1635 698h2M1106 438h2M440 295h2M523 400h2M1558 380h2M1475 428h2M751 595h2M1066 437h2M516 398h2M424 833h2M638 682h2M326 810h2M1082 1154h2M1281 1075h2M387 850h2M806 1153h2M1249 369h2M1592 1083h2M679 593h2M1679 1048h2M402 649h2M1481 426h2M1082 740h2M236 616h2M1599 794h2M791 325h2M1567 812h2M876 1047h2M1356 640h2M771 912h2M1230 558h2M1251 453h2M1288 820h2M657 374h2M1524 721h2M1565 270h2M252 499h2M632 1041h2M459 655h2M1677 858h2M1127 1097h2M622 965h2M1291 1018h2M218 641h2M405 970h2M411 845h2M1500 810h2M1480 276h2M1609 991h2M1273 421h2M1126 1000h2M961 650h2M203 933h2M399 749h2M1314 678h2M681 939h2M1291 724h2M1233 886h2M1143 1137h2M1635 491h2M301 692h2M854 998h2M1012 951h2M635 495h2M845 292h2M733 326h2M1004 576h2M1296 667h2M761 1047h2M1558 915h2M1111 734h2M732 679h2M1101 900h2M1450 1149h2M1147 1157h2M702 647h2M1380 382h2M1338 630h2M940 881h2M839 607h2M821 1104h2M1354 1137h2M276 741h2M1648 590h2M1174 375h2M588 687h2M825 528h2M300 815h2M1295 925h2M1329 838h2M930 1167h2M184 623h2M751 529h2M248 864h2M1277 994h2M1086 366h2M839 342h2M668 625h2M1086 729h2M512 1001h2M710 799h2M1642 754h2M660 687h2M1322 1138h2M1258 818h2M1046 620h2M989 1135h2M1025 466h2M417 400h2M1360 1151h2M1613 447h2M1691 296h2M893 596h2M1030 538h2M1351 377h2M575 345h2M617 379h2M349 718h2M378 601h2M1120 435h2M1111 986h2M926 1084h2M1243 372h2M345 732h2M1158 376h2M639 954h2M409 354h2M991 752h2M920 971h2M1013 777h2M1096 563h2M1375 839h2M909 497h2M1659 511h2M1560 1106h2M948 784h2M1041 820h2M439 477h2M825 335h2M388 756h2M1093 914h2M1518 748h2M293 862h2M1031 461h2M1224 916h2M1694 1145h2M813 483h2M1416 466h2M685 475h2M1671 1134h2M221 951h2M1395 993h2M946 805h2M1675 717h2M1580 731h2M1525 1000h2M787 853h2M1236 748h2M844 626h2M155 805h2M697 282h2M1235 1118h2M627 674h2M393 971h2M996 979h2M1310 863h2M1231 1062h2M1446 277h2M1684 507h2M811 618h2M270 623h2M1163 472h2M1212 276h2M836 692h2M1069 988h2M622 585h2M840 1023h2M617 686h2M935 347h2M363 587h2M1142 318h2M212 479h2M1230 501h2M1008 673h2M854 421h2M842 916h2M499 728h2M1190 746h2M766 492h2M1133 577h2M1329 949h2M1345 1078h2M897 934h2M1257 1080h2M1651 942h2M159 824h2M929 1107h2M152 1102h2M646 1145h2M995 538h2M810 419h2M779 1024h2M1504 271h2M311 752h2M567 1121h2M1075 843h2M157 596h2M1255 958h2M1380 904h2M1233 339h2M547 1126h2M755 346h2M383 444h2M384 474h2M928 553h2M679 683h2M1526 695h2M928 689h2M1232 457h2M716 422h2M1451 414h2M1571 1039h2M1157 816h2M570 516h2M947 347h2M1568 595h2M326 493h2M1231 287h2M339 857h2M1378 1041h2M904 515h2M1009 811h2M913 1016h2M1013 842h2M1566 435h2M1250 1003h2M590 437h2M1047 505h2M1108 495h2M992 992h2M764 716h2M687 996h2M1161 981h2M1062 778h2M200 938h2M1237 1123h2M362 770h2M291 444h2M859 758h2M1232 615h2M420 738h2M1292 357h2M723 422h2M801 597h2M1157 888h2M157 421h2M569 646h2M824 663h2M1302 718h2M1210 310h2M1364 1125h2M831 975h2M1303 337h2M778 651h2M1150 559h2M1180 646h2M1204 507h2M701 451h2M1268 387h2M1107 1083h2M995 786h2M1606 530h2M878 773h2M1112 349h2M1125 646h2M455 777h2M1322 778h2M455 498h2M1106 275h2M686 1008h2M1628 509h2M1395 560h2M743 877h2M659 1161h2M638 928h2M1195 865h2M420 750h2M576 1004h2M852 585h2M288 504h2M1068 428h2M1670 1163h2M430 521h2M590 1159h2M361 590h2M1207 656h2M528 425h2M972 281h2M1136 366h2M475 497h2M361 502h2M809 357h2M942 802h2M1614 983h2M1203 397h2M347 754h2M1060 1125h2M817 976h2M966 377h2M629 538h2M1285 317h2M870 396h2M1115 518h2M389 488h2M412 273h2M1425 1055h2M168 279h2M506 537h2M575 1156h2M339 1080h2M636 844h2M1403 700h2M1206 306h2M602 451h2M309 1027h2M660 1018h2M1266 677h2M290 848h2M1096 860h2M1380 922h2M1340 753h2M681 590h2M1167 1109h2M1436 363h2M671 402h2M1237 1156h2M1170 514h2M666 408h2M1538 649h2M1537 576h2M1051 538h2M475 656h2M329 966h2M358 388h2M672 1147h2M1457 930h2M1139 836h2M1009 749h2M867 557h2M256 768h2M805 631h2M323 907h2M1267 756h2M658 1049h2M948 300h2M927 880h2M1417 781h2M931 731h2M183 885h2M853 396h2M541 992h2M1468 1095h2M697 743h2M990 618h2M520 1155h2M882 276h2M1288 1135h2M1412 720h2M362 891h2M519 1040h2M452 743h2M1491 1139h2M438 1055h2M1338 824h2M884 772h2M804 989h2M1251 1016h2M1155 822h2M1503 575h2M1089 846h2M1007 583h2M614 433h2M1138 641h2M283 1049h2M1450 581h2M341 766h2M803 318h2M1418 707h2M1508 481h2M521 344h2M410 947h2M1601 745h2M933 834h2M1530 628h2M672 790h2M1485 647h2M642 558h2M380 935h2M1665 938h2M1258 1123h2M603 529h2M903 639h2M1317 971h2M1038 827h2M1067 340h2M295 971h2M603 1091h2M845 292h2M1577 616h2M1200 476h2M882 566h2M1174 394h2M643 641h2M648 339h2M1565 930h2M1017 586h2M1226 1075h2M1263 603h2M1287 932h2M1337 345h2M532 1006h2M1115 283h2M1447 481h2M1296 795h2M469 402h2M904 1114h2M423 631h2M1268 747h2M1435 1078h2M512 1157h2M813 761h2M556 566h2M1249 329h2M1095 604h2M1331 448h2M942 643h2M1238 484h2M1047 829h2M1279 552h2M1561 759h2M568 418h2M321 1086h2M235 329h2M239 934h2M680 783h2M1694 743h2M1003 603h2M1213 1143h2M1198 463h2M1270 628h2M858 309h2M893 454h2M761 712h2M1245 815h2M1518 772h2M1597 607h2M1082 866h2M1618 899h2M1025 700h2M376 762h2M523 896h2M1502 1040h2M626 1087h2M521 743h2M1544 1033h2M661 354h2M1530 774h2M1391 1052h2M1050 1026h2M893 756h2M911 388h2M911 587h2M1197 527h2M410 335h2M1190 512h2M1080 439h2M197 1145h2M914 1163h2M697 903h2M429 704h2M1514 830h2M561 393h2M1024 857h2M749 1116h2M713 311h2M575 1122h2M1283 1057h2M310 428h2M1218 1045h2M563 654h2M772 467h2M622 491h2M212 792h2M1597 824h2M377 795h2M948 989h2M1007 977h2M1334 1166h2M729 460h2M1494 1130h2M1382 324h2M557 822h2M1653 1146h2M1304 786h2M191 1122h2M1485 896h2M1295 944h2M508 282h2M1148 1159h2M1121 353h2M978 1081h2M1336 743h2M1583 735h2M1559 762h2M1604 706h2M751 748h2M960 646h2M1348 1050h2M635 536h2M839 812h2M1537 766h2M1342 734h2M744 1083h2M1252 905h2M212 282h2M1386 368h2M408 359h2M1355 499h2M913 1040h2M987 1077h2M1279 637h2M1186 382h2M1093 460h2M1560 997h2M1564 722h2M338 825h2M909 368h2M1226 821h2M1566 1155h2M889 1036h2M560 760h2M1108 460h2M1397 795h2M641 728h2M1166 670h2M964 497h2M1038 992h2M1503 1036h2M736 1074h2M335 479h2M332 798h2M1510 547h2M810 447h2M532 724h2M1370 382h2M1211 279h2M328 1092h2M780 832h2M1408 454h2M1390 810h2M526 356h2M455 333h2M1193 842h2M687 754h2M1597 952h2M1125 1127h2M1626 918h2M1294 307h2" stroke="#5a5b56" stroke-width="2" fill="none" transform="translate(0,1)" shape-rendering="crispEdges"/>
<path d="M411 474h2M1573 1049h2M543 1039h2M1574 395h2M789 355h2M412 623h2M1193 1132h2M1159 335h2M1304 951h2M495 491h2M597 1007h2M1404 293h2M902 855h2M888 358h2M733 788h2M635 981h2M1360 1007h2M683 412h2M1687 1118h2M1440 1103h2M1610 353h2M1123 795h2M1681 1061h2M1191 428h2M1353 985h2M569 434h2M1414 641h2M693 836h2M1642 915h2M1587 800h2M1109 955h2M1187 838h2M414 580h2M374 1149h2M670 523h2M1252 972h2M954 1091h2M810 856h2M1224 955h2M1412 779h2M1249 489h2M1161 1133h2M842 983h2M517 951h2M1055 572h2M568 627h2M305 561h2M454 302h2M1368 1086h2M408 532h2M1037 649h2M1508 826h2M168 382h2M1631 539h2M1292 925h2M539 1040h2M798 1123h2M322 863h2M843 502h2M812 1093h2M1300 450h2M640 755h2M1287 314h2M1513 406h2M1682 400h2M1666 1082h2M1687 824h2M253 900h2M1194 885h2M781 941h2M793 936h2M1558 391h2M1627 872h2M366 564h2M1632 1064h2M275 377h2M697 855h2M959 602h2M1248 1100h2M1057 557h2M524 920h2M204 515h2M884 285h2M1244 596h2M768 780h2M658 491h2M178 884h2M1115 846h2M463 1111h2M823 362h2M1578 374h2M1366 312h2M1155 1132h2M1399 576h2M968 352h2M394 642h2M1691 988h2M340 703h2M446 1037h2M1524 765h2M1123 486h2M1438 937h2M1419 445h2M1416 1067h2M572 873h2M1667 1042h2M689 553h2M584 737h2M1213 948h2M1620 422h2M1187 989h2M1333 331h2M1190 973h2M161 797h2M236 965h2M1671 534h2M733 631h2M750 743h2M1650 587h2M1580 781h2M473 1057h2M915 803h2M802 980h2M1376 694h2M888 743h2M995 669h2M884 449h2M433 276h2M795 617h2M1509 756h2M1607 937h2M608 521h2M161 604h2M575 1041h2M1691 569h2M658 982h2M150 937h2M617 321h2M1014 917h2M443 902h2M1677 1074h2M1681 430h2M641 344h2M1276 1010h2M532 1141h2M326 561h2M324 659h2M765 369h2M150 826h2M836 1035h2M1185 1023h2M554 654h2M580 1090h2M1587 386h2M1633 1062h2M1102 1016h2M1249 1004h2M196 471h2M1118 924h2M1074 278h2M1304 638h2M411 935h2M1477 1030h2M1150 302h2M1163 692h2M954 299h2M785 1086h2M1537 736h2M1199 397h2M590 1031h2M940 732h2M1590 892h2M209 853h2M769 948h2M1278 852h2M1369 406h2M443 863h2M690 991h2M1512 882h2M1144 1055h2M967 360h2M796 815h2M724 697h2M1190 875h2M1263 619h2M444 450h2M1004 415h2M1290 454h2M1021 1022h2M147 349h2M193 387h2M1323 807h2M637 300h2M539 961h2M1609 650h2M245 886h2M299 872h2M201 1065h2M639 821h2M663 992h2M1105 531h2M760 808h2M261 846h2M1008 403h2M964 1106h2M1690 555h2M1655 280h2M1604 1017h2M1410 505h2M541 448h2M1658 390h2M1405 1129h2M1386 727h2M205 304h2M1479 932h2M801 421h2M171 804h2M1220 972h2M1309 626h2M665 459h2M1690 957h2M1003 747h2M626 345h2M502 758h2M1137 845h2M1603 1155h2M646 274h2M785 479h2M841 537h2M1257 420h2M1226 634h2M1229 418h2M1301 636h2M1141 611h2M993 907h2M221 831h2M1351 739h2M925 1000h2M1038 639h2M1390 532h2M592 509h2M1339 376h2M1009 609h2M867 685h2M834 466h2M843 977h2M616 1082h2M887 780h2M387 697h2M1075 920h2M1679 684h2M878 800h2M1406 1166h2M1039 466h2M898 449h2M692 1068h2M835 882h2M185 512h2M1537 1137h2M547 959h2M651 1094h2M1136 700h2M396 723h2M1652 1137h2M414 365h2M1691 1096h2M458 727h2M667 464h2M1102 878h2M552 811h2M1516 273h2M1142 377h2M1677 450h2M270 954h2M1157 1091h2M854 374h2M846 334h2M1598 330h2M1195 890h2M270 879h2M457 349h2M740 731h2M166 841h2M1069 537h2M879 902h2M1691 1105h2M668 731h2M617 635h2M273 665h2M1603 953h2M463 606h2M1476 1047h2M1036 549h2M1492 810h2M1211 570h2M1439 840h2M1570 364h2M1064 286h2M1218 442h2M1223 754h2M1187 611h2M1460 1074h2M1543 1076h2M801 543h2M1574 1042h2M259 805h2M1444 328h2M1636 850h2M847 854h2M1654 594h2M1543 974h2M903 436h2M1138 659h2M699 1039h2M950 900h2M1177 365h2M991 296h2M1450 854h2M743 479h2M1087 593h2M651 973h2M1477 420h2M1140 408h2M1303 599h2M1207 413h2M1422 954h2M1491 992h2M782 663h2M189 504h2M1404 274h2M483 725h2M1625 778h2M373 504h2M584 911h2M748 545h2M1417 558h2M291 860h2M1353 430h2M411 643h2M497 784h2M728 867h2M293 963h2M376 715h2M421 414h2M891 743h2M1544 341h2M1464 404h2M433 439h2M1575 311h2M806 593h2M1648 364h2M1417 571h2M820 496h2M951 642h2M554 1002h2M1053 750h2M1631 423h2M1107 495h2M967 538h2M884 1042h2M436 1015h2M941 453h2M1226 586h2M776 737h2M179 992h2M841 768h2M465 1120h2M1557 758h2M475 1092h2M789 755h2M1538 1022h2M1127 611h2M577 653h2M919 274h2M1670 1065h2M866 1148h2M1385 853h2M1263 559h2M278 1082h2M887 1009h2M237 1040h2M1414 389h2M1262 1167h2M592 890h2M1200 641h2M1084 708h2M1430 512h2M510 513h2M927 899h2M1300 934h2M762 882h2M903 1126h2M1157 868h2M361 555h2M782 290h2M1470 497h2M1506 664h2M945 668h2M648 640h2M738 644h2" stroke="#4a625c" stroke-width="2" fill="none" transform="translate(0,1)" shape-rendering="crispEdges"/>
<path d="M461 690h2M1512 331h2M1187 926h2M1169 1075h2M660 396h2M1462 781h2M1458 941h2M154 1044h2M1325 556h2M1256 322h2M684 885h2M885 1029h2M1465 653h2M1346 1132h2M1574 862h2M1270 959h2M1409 856h2M632 687h2M991 856h2M783 468h2M223 1082h2M695 593h2M1554 445h2M277 650h2M795 631h2M1242 422h2M1016 862h2M802 953h2M708 428h2M475 681h2M1075 867h2M1181 940h2M961 1125h2M978 845h2M853 621h2M970 484h2M1632 461h2M598 559h2M1367 1060h2M1422 767h2M637 930h2M600 763h2M767 605h2M719 672h2M1624 475h2M1427 770h2M954 809h2M1571 577h2M1333 322h2M1446 795h2M1624 779h2M685 776h2M1371 1022h2M1622 524h2M887 348h2M296 389h2M1551 750h2M1081 690h2M355 1162h2M568 818h2M1591 373h2M664 727h2M1260 955h2M1064 1102h2M401 838h2M383 1026h2M1613 875h2M829 436h2M930 493h2M1253 592h2M1098 787h2M1228 1042h2M334 1110h2M456 1135h2M488 743h2M383 1021h2M809 906h2M1533 763h2M448 883h2M1040 302h2M418 657h2M350 301h2M1199 412h2M493 585h2M1494 504h2M1035 799h2M895 559h2M1177 545h2M1436 572h2M420 878h2M892 1123h2M388 598h2M364 654h2M385 1014h2M506 467h2M962 338h2M997 485h2M1650 1152h2M1286 1151h2M1382 601h2M1508 576h2M1472 936h2M716 397h2M1584 951h2M791 441h2M1416 554h2M1364 784h2M1628 758h2M758 476h2M1264 1152h2M598 301h2M386 423h2M857 431h2M963 1129h2M305 726h2M1391 349h2M240 1021h2M1496 638h2M1690 736h2M1511 941h2M735 753h2M1244 704h2M318 787h2M1588 401h2M488 941h2M435 831h2M366 420h2M1464 469h2M1431 800h2M1407 1047h2M1123 674h2M1412 965h2M831 667h2M255 872h2M1198 709h2M1078 999h2M1071 773h2M313 1117h2M806 470h2M437 347h2M858 802h2M1219 787h2M805 1007h2M235 873h2M1524 768h2M1692 324h2M711 685h2M1186 879h2M174 612h2M1002 1024h2M827 980h2M1092 1083h2M504 417h2M1408 992h2M1562 869h2M1230 1129h2M1372 705h2M1694 861h2M998 1153h2M1582 967h2M1674 886h2M647 1020h2M691 1022h2M789 959h2M1339 357h2M1461 1069h2M677 738h2M683 1093h2M415 455h2M1213 1147h2M496 449h2M1417 766h2M1521 827h2M321 753h2M190 1061h2M881 407h2M450 655h2M1139 1161h2M963 629h2M922 553h2M1219 819h2M1520 380h2M980 959h2M978 1001h2M1325 358h2M836 578h2M278 683h2M172 502h2M1375 324h2M1324 563h2M1683 1061h2M973 445h2M1598 454h2M874 717h2M632 1047h2M1678 993h2M261 450h2M1314 317h2M940 749h2M893 391h2M466 336h2M626 366h2M1263 467h2M1428 475h2M800 1092h2M556 344h2M1373 942h2M944 744h2M1560 1013h2M769 433h2M1522 976h2M1488 746h2M1075 381h2M1652 606h2M291 573h2M1008 544h2M965 998h2M1022 692h2M849 1097h2M1519 1004h2M1054 723h2M611 293h2M1088 586h2M1240 786h2M152 582h2M1239 718h2M461 422h2M702 799h2M1100 1136h2M497 720h2M1429 1049h2M1013 377h2M167 557h2M1667 771h2M852 372h2M1255 632h2M916 1021h2M1129 542h2M879 493h2M1036 1040h2M1455 374h2M1474 399h2M377 484h2M813 537h2M853 623h2M986 669h2M627 903h2M1054 611h2M1178 643h2M1642 645h2M1493 450h2M1059 545h2M897 790h2M1307 655h2M1275 358h2M1567 497h2M1307 673h2M1458 931h2M769 713h2M1226 994h2M1180 1059h2M246 662h2M1037 881h2M856 877h2M1014 1091h2M1116 678h2M1032 891h2M754 890h2M974 689h2M408 282h2M1123 748h2M745 299h2M1614 269h2M244 770h2M1116 329h2M602 1030h2M1456 512h2M1038 565h2M710 1031h2M490 1084h2M1512 869h2M1096 916h2M1205 704h2M316 815h2M815 776h2M1370 460h2M317 1123h2M208 279h2M991 1053h2M1182 741h2M1241 707h2M487 884h2M740 1009h2M1179 305h2M524 1149h2M922 440h2M1577 502h2M1044 388h2M1611 1108h2M888 609h2M600 417h2M1356 718h2M1047 382h2M1630 980h2M1552 338h2M1267 708h2M936 939h2M1186 518h2M1510 1038h2M1195 381h2M917 314h2M1617 577h2M1041 797h2M1156 446h2M940 1074h2M1036 486h2M1007 1118h2M778 1011h2M1187 687h2M651 598h2M908 569h2M199 952h2M1663 829h2M1227 520h2M682 821h2M280 672h2M857 592h2M1250 748h2M1469 381h2M692 503h2M1180 697h2M365 582h2M420 913h2M830 1120h2M927 1013h2M1328 982h2M541 420h2M1062 602h2M1086 1056h2M1130 472h2M283 836h2M1615 816h2M1063 789h2M795 1148h2M1008 620h2M893 1056h2M1431 1006h2M195 1035h2M878 1028h2M1336 505h2M1310 941h2M358 1012h2M643 1049h2M668 941h2M724 555h2M1219 882h2M776 1112h2M1664 787h2M290 449h2M1446 626h2M751 1013h2M1557 872h2M1021 892h2M762 511h2M637 411h2M1280 829h2M1174 953h2M619 1018h2M922 375h2M1284 965h2M1611 1076h2M1036 378h2M1217 621h2M1235 518h2M1052 416h2M1029 895h2M1601 682h2M1126 763h2M897 1052h2M1022 647h2M600 412h2M1564 1113h2M1000 505h2M609 402h2M1672 827h2M611 998h2M1245 891h2M495 457h2M496 1048h2M1075 328h2M432 596h2M906 299h2M900 1141h2M480 391h2M1033 930h2M462 623h2M468 1133h2M404 300h2M1612 988h2M1040 700h2" stroke="#68684f" stroke-width="2" fill="none" transform="translate(0,1)" shape-rendering="crispEdges"/>
<path d="M147.0 955.4L1697.0 873.2M147.0 967.6L1697.0 883.0M147.0 980.6L1697.0 893.5M147.0 994.4L1697.0 904.5M147.0 1009.1L1697.0 916.3M147.0 1024.8L1697.0 928.9M147.0 1041.6L1697.0 942.3M147.0 1059.6L1697.0 956.7M147.0 1078.9L1697.0 972.2M147.0 1099.7L1697.0 988.9M147.0 1122.2L1697.0 1006.9M147.0 1146.5L1697.0 1026.5M197.0 1169.0L1697.0 1047.7M537.0 1169.0L1697.0 1070.9M877.0 1169.0L1697.0 1096.3M1217.0 1169.0L1697.0 1124.3M1557.1 1169.0L1697.0 1155.3M246.9 950.1L147.0 1038.8M369.3 943.6L180.0 1169.0M488.0 937.3L359.6 1169.0M602.9 931.2L539.2 1169.0M714.4 925.3L718.8 1169.0M822.6 919.6L898.4 1169.0M927.6 914.0L1078.0 1169.0M1029.5 908.6L1257.6 1169.0M1128.5 903.4L1437.2 1169.0M1224.8 898.3L1616.8 1169.0M1318.4 893.3L1697.0 1111.7M1409.4 888.5L1697.0 1030.9M1497.9 883.8L1697.0 970.1M1584.1 879.2L1697.0 922.8M1668.0 874.8L1697.0 884.8" stroke="#e2e2e2" stroke-width="1" fill="none" shape-rendering="crispEdges"/>
<line x1="141.3" y1="797.8" x2="1702.7" y2="315.0" stroke="#ff000c" stroke-width="4.93" />
<line x1="1581.0" y1="928.2" x2="141.3" y2="440.8" stroke="#84020c" stroke-width="4.89" />
<line x1="1581.0" y1="928.2" x2="141.0" y2="1016.4" stroke="#84020c" stroke-width="5.14" />
<defs>
<pattern id="mg" width="5" height="7" patternUnits="userSpaceOnUse" patternTransform="skewY(-9)"><rect width="5" height="7" fill="#e600e6"/><rect x="3.5" y="0" width="1.3" height="4.5" fill="#300030"/></pattern>
<linearGradient id="mgf" x1="0" y1="0" x2="1" y2="0"><stop offset="0" stop-color="#e000e0" stop-opacity="1"/><stop offset="0.3" stop-color="#e000e0" stop-opacity="0.8"/><stop offset="1" stop-color="#e000e0" stop-opacity="0.05"/></linearGradient>
<pattern id="gr" width="9.500" height="8" patternUnits="userSpaceOnUse" patternTransform="skewY(-2)"><rect width="9.500" height="8" fill="#00f800"/><rect x="1" y="1" width="6.500" height="1.100" fill="#1478dc"/><rect x="5.700" y="5" width="3.800" height="1.100" fill="#1478dc"/><rect x="0" y="5" width="2.700" height="1.100" fill="#1478dc"/></pattern>
</defs>
<polygon points="1133,724.5 1138,468 1270.2,446 1255.6,775.5" fill="#d412d4"/>
<g stroke="#140014" stroke-width="1.35" stroke-dasharray="3.2 2.2" fill="none"><line x1="1147.0" y1="467.5" x2="1141.3" y2="727.0" stroke-dashoffset="0.0"/><line x1="1154.9" y1="466.2" x2="1148.7" y2="730.0" stroke-dashoffset="1.7"/><line x1="1161.5" y1="465.1" x2="1154.8" y2="732.6" stroke-dashoffset="3.4"/><line x1="1167.3" y1="464.1" x2="1160.1" y2="734.8" stroke-dashoffset="5.1"/><line x1="1172.4" y1="463.3" x2="1164.9" y2="736.8" stroke-dashoffset="1.4"/><line x1="1177.1" y1="462.5" x2="1169.3" y2="738.6" stroke-dashoffset="3.1"/><line x1="1181.5" y1="461.8" x2="1173.3" y2="740.3" stroke-dashoffset="4.8"/><line x1="1185.5" y1="461.1" x2="1177.1" y2="741.8" stroke-dashoffset="1.1"/><line x1="1189.4" y1="460.4" x2="1180.7" y2="743.3" stroke-dashoffset="2.8"/><line x1="1193.1" y1="459.8" x2="1184.1" y2="744.8" stroke-dashoffset="4.5"/><line x1="1196.7" y1="459.2" x2="1187.4" y2="746.1" stroke-dashoffset="0.8"/><line x1="1200.1" y1="458.7" x2="1190.6" y2="747.5" stroke-dashoffset="2.5"/><line x1="1203.4" y1="458.1" x2="1193.7" y2="748.7" stroke-dashoffset="4.2"/><line x1="1206.6" y1="457.6" x2="1196.6" y2="750.0" stroke-dashoffset="0.5"/><line x1="1209.8" y1="457.1" x2="1199.6" y2="751.2" stroke-dashoffset="2.2"/><line x1="1212.9" y1="456.5" x2="1202.4" y2="752.4" stroke-dashoffset="3.9"/><line x1="1215.9" y1="456.0" x2="1205.2" y2="753.5" stroke-dashoffset="0.2"/><line x1="1218.8" y1="455.5" x2="1208.0" y2="754.7" stroke-dashoffset="1.9"/><line x1="1221.8" y1="455.1" x2="1210.7" y2="755.8" stroke-dashoffset="3.6"/><line x1="1224.6" y1="454.6" x2="1213.3" y2="756.9" stroke-dashoffset="5.3"/><line x1="1227.5" y1="454.1" x2="1216.0" y2="758.0" stroke-dashoffset="1.6"/><line x1="1230.3" y1="453.6" x2="1218.6" y2="759.1" stroke-dashoffset="3.3"/><line x1="1233.1" y1="453.2" x2="1221.2" y2="760.2" stroke-dashoffset="5.0"/><line x1="1235.8" y1="452.7" x2="1223.7" y2="761.2" stroke-dashoffset="1.3"/><line x1="1238.5" y1="452.3" x2="1226.2" y2="762.3" stroke-dashoffset="3.0"/><line x1="1241.2" y1="451.8" x2="1228.7" y2="763.3" stroke-dashoffset="4.7"/><line x1="1243.9" y1="451.4" x2="1231.2" y2="764.4" stroke-dashoffset="1.0"/><line x1="1246.6" y1="450.9" x2="1233.7" y2="765.4" stroke-dashoffset="2.7"/><line x1="1249.3" y1="450.5" x2="1236.2" y2="766.4" stroke-dashoffset="4.4"/><line x1="1251.9" y1="450.0" x2="1238.6" y2="767.4" stroke-dashoffset="0.7"/><line x1="1254.5" y1="449.6" x2="1241.1" y2="768.5" stroke-dashoffset="2.4"/><line x1="1257.1" y1="449.2" x2="1243.5" y2="769.5" stroke-dashoffset="4.1"/><line x1="1259.7" y1="448.7" x2="1245.9" y2="770.5" stroke-dashoffset="0.4"/><line x1="1262.3" y1="448.3" x2="1248.3" y2="771.5" stroke-dashoffset="2.1"/><line x1="1264.9" y1="447.9" x2="1250.7" y2="772.5" stroke-dashoffset="3.8"/><line x1="1267.5" y1="447.4" x2="1253.1" y2="773.5" stroke-dashoffset="0.1"/></g>
<polygon points="1138,679.5 1188,684 1188,691.5 1138,687.5" fill="#0080ff"/>
<polygon points="1188,685 1258,690 1258,697 1188,690.5" fill="#0080ff" opacity="0.55"/>
<clipPath id="ycl"><path d="M1031.0 402.3C1026.9 408.0 1013.4 421.5 1006.6 436.7C999.9 451.9 994.6 472.5 990.4 493.5C986.3 514.4 983.5 540.7 981.5 562.3C979.5 583.9 978.1 600.8 978.3 623.1C978.4 645.4 979.6 674.4 982.3 696.0C985.0 717.7 989.1 734.5 994.5 752.8C999.9 771.0 1007.3 791.6 1014.7 805.4C1022.2 819.3 1035.0 830.8 1039.1 835.8L1079.6 835.8C1082.3 832.8 1090.0 826.7 1095.8 817.6C1101.5 808.5 1108.3 796.0 1114.0 781.1C1119.8 766.3 1126.0 746.7 1130.2 728.5C1134.5 710.2 1137.5 689.3 1139.5 671.7C1141.6 654.2 1142.4 639.3 1142.4 623.1C1142.4 606.9 1141.9 591.4 1139.5 574.5C1137.2 557.6 1132.8 539.4 1128.2 521.8C1123.6 504.3 1118.1 485.3 1112.0 469.1C1105.9 452.9 1098.5 435.7 1091.7 424.6C1085.0 413.4 1074.9 406.0 1071.5 402.3Z"/></clipPath>
<g><path d="M1031.0 402.3C1026.9 408.0 1013.4 421.5 1006.6 436.7C999.9 451.9 994.6 472.5 990.4 493.5C986.3 514.4 983.5 540.7 981.5 562.3C979.5 583.9 978.1 600.8 978.3 623.1C978.4 645.4 979.6 674.4 982.3 696.0C985.0 717.7 989.1 734.5 994.5 752.8C999.9 771.0 1007.3 791.6 1014.7 805.4C1022.2 819.3 1035.0 830.8 1039.1 835.8L1079.6 835.8C1082.3 832.8 1090.0 826.7 1095.8 817.6C1101.5 808.5 1108.3 796.0 1114.0 781.1C1119.8 766.3 1126.0 746.7 1130.2 728.5C1134.5 710.2 1137.5 689.3 1139.5 671.7C1141.6 654.2 1142.4 639.3 1142.4 623.1C1142.4 606.9 1141.9 591.4 1139.5 574.5C1137.2 557.6 1132.8 539.4 1128.2 521.8C1123.6 504.3 1118.1 485.3 1112.0 469.1C1105.9 452.9 1098.5 435.7 1091.7 424.6C1085.0 413.4 1074.9 406.0 1071.5 402.3Z" fill="#c9a012"/>
<g clip-path="url(#ycl)">
<path d="M1031.0 402.3C1026.9 408.0 1013.4 421.5 1006.6 436.7C999.9 451.9 994.6 472.5 990.4 493.5C986.3 514.4 983.5 540.7 981.5 562.3C979.5 583.9 978.1 600.8 978.3 623.1C978.4 645.4 979.6 674.4 982.3 696.0C985.0 717.7 989.1 734.5 994.5 752.8C999.9 771.0 1007.3 791.6 1014.7 805.4C1022.2 819.3 1035.0 830.8 1039.1 835.8L1079.6 835.8C1082.3 832.8 1090.0 826.7 1095.8 817.6C1101.5 808.5 1108.3 796.0 1114.0 781.1C1119.8 766.3 1126.0 746.7 1130.2 728.5C1134.5 710.2 1137.5 689.3 1139.5 671.7C1141.6 654.2 1142.4 639.3 1142.4 623.1C1142.4 606.9 1141.9 591.4 1139.5 574.5C1137.2 557.6 1132.8 539.4 1128.2 521.8C1123.6 504.3 1118.1 485.3 1112.0 469.1C1105.9 452.9 1098.5 435.7 1091.7 424.6C1085.0 413.4 1074.9 406.0 1071.5 402.3Z" fill="#e4b61b"/>
<ellipse cx="1047" cy="619" rx="78" ry="225" fill="#c9a012" transform="rotate(1.5 1047 619)"/>
<ellipse cx="1047" cy="619" rx="78" ry="225" fill="none" stroke="#a8840e" stroke-width="2" transform="rotate(1.5 1047 619)"/>
<path d="M1019.0 624.0L1127.0 619.0M1019.0 624.0L1126.8 635.9M1019.0 624.0L1126.1 652.7M1019.0 624.0L1125.0 669.3M1019.0 624.0L1123.4 685.6M1019.0 624.0L1121.5 701.6M1019.0 624.0L1119.1 717.1M1019.0 624.0L1116.3 732.0M1019.0 624.0L1113.1 746.3M1019.0 624.0L1109.5 759.9M1019.0 624.0L1105.6 772.7M1019.0 624.0L1101.4 784.7M1019.0 624.0L1096.9 795.7M1019.0 624.0L1092.1 805.7M1019.0 624.0L1087.0 814.7M1019.0 624.0L1081.7 822.6M1019.0 624.0L1076.2 829.4M1019.0 624.0L1070.6 835.0M1019.0 624.0L1064.8 839.3M1019.0 624.0L1058.9 842.5M1019.0 624.0L1053.0 844.4M1019.0 624.0L1047.0 845.0M1019.0 624.0L1041.0 844.4M1019.0 624.0L1035.1 842.5M1019.0 624.0L1029.2 839.3M1019.0 624.0L1023.4 835.0M1019.0 624.0L1017.8 829.4M1019.0 624.0L1012.3 822.6M1019.0 624.0L1007.0 814.7M1019.0 624.0L1001.9 805.7M1019.0 624.0L997.1 795.7M1019.0 624.0L992.6 784.7M1019.0 624.0L988.4 772.7M1019.0 624.0L984.5 759.9M1019.0 624.0L980.9 746.3M1019.0 624.0L977.7 732.0M1019.0 624.0L974.9 717.1M1019.0 624.0L972.5 701.6M1019.0 624.0L970.6 685.6M1019.0 624.0L969.0 669.3M1019.0 624.0L967.9 652.7M1019.0 624.0L967.2 635.9M1019.0 624.0L967.0 619.0M1019.0 624.0L967.2 602.1M1019.0 624.0L967.9 585.3M1019.0 624.0L969.0 568.7M1019.0 624.0L970.6 552.4M1019.0 624.0L972.5 536.4M1019.0 624.0L974.9 520.9M1019.0 624.0L977.7 506.0M1019.0 624.0L980.9 491.7M1019.0 624.0L984.5 478.1M1019.0 624.0L988.4 465.3M1019.0 624.0L992.6 453.3M1019.0 624.0L997.1 442.3M1019.0 624.0L1001.9 432.3M1019.0 624.0L1007.0 423.3M1019.0 624.0L1012.3 415.4M1019.0 624.0L1017.8 408.6M1019.0 624.0L1023.4 403.0M1019.0 624.0L1029.2 398.7M1019.0 624.0L1035.1 395.5M1019.0 624.0L1041.0 393.6M1019.0 624.0L1047.0 393.0M1019.0 624.0L1053.0 393.6M1019.0 624.0L1058.9 395.5M1019.0 624.0L1064.8 398.7M1019.0 624.0L1070.6 403.0M1019.0 624.0L1076.2 408.6M1019.0 624.0L1081.7 415.4M1019.0 624.0L1087.0 423.3M1019.0 624.0L1092.1 432.3M1019.0 624.0L1096.9 442.3M1019.0 624.0L1101.4 453.3M1019.0 624.0L1105.6 465.3M1019.0 624.0L1109.5 478.1M1019.0 624.0L1113.1 491.7M1019.0 624.0L1116.3 506.0M1019.0 624.0L1119.1 520.9M1019.0 624.0L1121.5 536.4M1019.0 624.0L1123.4 552.4M1019.0 624.0L1125.0 568.7M1019.0 624.0L1126.1 585.3M1019.0 624.0L1126.8 602.1" stroke="#7a6008" stroke-width="1.2" fill="none" opacity="0.55"/>
<path d="M1019.0 624.0L1053.9 414.1M1019.0 624.0L1065.7 421.5M1019.0 624.0L1077.0 435.5M1019.0 624.0L1087.2 455.6M1019.0 624.0L1096.0 481.2M1019.0 624.0L1103.3 511.4M1019.0 624.0L1108.6 545.2M1019.0 624.0L1111.9 581.5M1019.0 624.0L1113.0 619.0M1019.0 624.0L1111.9 656.5M1019.0 624.0L1108.6 692.8M1019.0 624.0L1103.3 726.6M1019.0 624.0L1096.0 756.8M1019.0 624.0L1087.2 782.4M1019.0 624.0L1077.0 802.5M1019.0 624.0L1065.7 816.5M1019.0 624.0L1053.9 823.9" stroke="#7a6008" stroke-width="2.4" fill="none" opacity="0.85"/>
<path d="M1047.0 416.0L1047.0 394.0M1047.0 416.0L1069.0 403.1M1064.5 424.2L1069.0 403.1M1064.5 424.2L1089.2 429.7M1080.5 448.2L1089.2 429.7M1080.5 448.2L1105.9 471.7M1093.9 486.1L1105.9 471.7M1093.9 486.1L1118.0 525.5M1103.4 534.7L1118.0 525.5M1103.4 534.7L1124.2 587.0M1108.4 590.1L1124.2 587.0M1108.4 590.1L1124.2 651.0M1108.4 647.9L1124.2 651.0M1108.4 647.9L1118.0 712.5M1103.4 703.3L1118.0 712.5M1103.4 703.3L1105.9 766.3M1093.9 751.9L1105.9 766.3M1093.9 751.9L1089.2 808.3M1080.5 789.8L1089.2 808.3M1080.5 789.8L1069.0 834.9M1064.5 813.8L1069.0 834.9M1064.5 813.8L1047.0 844.0" stroke="#7a6008" stroke-width="2.2" fill="none" opacity="0.9" transform="rotate(1.5 1047 619)"/>
<g fill="none" stroke="#7a6008" stroke-width="1.3" opacity="0.55"><ellipse cx="1021.3" cy="620.8" rx="5.2" ry="16.9"/><ellipse cx="1023.7" cy="620.7" rx="10.3" ry="33.8"/><ellipse cx="1026.0" cy="620.5" rx="15.5" ry="50.8"/><ellipse cx="1028.3" cy="620.3" rx="20.7" ry="67.7"/><ellipse cx="1030.7" cy="620.2" rx="25.8" ry="84.6"/><ellipse cx="1033.0" cy="620.0" rx="31.0" ry="101.5"/><ellipse cx="1035.3" cy="619.8" rx="36.2" ry="118.4"/><ellipse cx="1037.7" cy="619.7" rx="41.3" ry="135.3"/><ellipse cx="1040.0" cy="619.5" rx="46.5" ry="152.2"/><ellipse cx="1042.3" cy="619.3" rx="51.7" ry="169.2"/><ellipse cx="1044.7" cy="619.2" rx="56.8" ry="186.1"/></g>
<ellipse cx="1047" cy="619" rx="62" ry="203" fill="none" stroke="#7a6008" stroke-width="2.2" opacity="0.85" transform="rotate(1.5 1047 619)"/>
<ellipse cx="1000" cy="600" rx="24" ry="170" fill="#7a6008" opacity="0.35"/>
<pattern id="yh" width="4" height="4" patternUnits="userSpaceOnUse"><path d="M0,4 L4,0 M-1,1 L1,-1 M3,5 L5,3" stroke="#6a5206" stroke-width="1"/></pattern>
<ellipse cx="1047" cy="619" rx="78" ry="225" fill="url(#yh)" opacity="0.42" transform="rotate(1.5 1047 619)"/>
<path d="M1019,624 V671" stroke="#e4b61b" stroke-width="1.5"/>
</g></g>
<polygon points="954,657.5 1017,669 1017,673 954,661.5" fill="#0080ff"/>
<clipPath id="ocl"><path d="M840.5 463.9L921.6 463.9C923.9 465.8 931.6 466.9 935.7 475.2C939.9 483.5 943.8 497.2 946.7 513.7C949.6 530.3 951.9 554.9 953.2 574.5C954.4 594.1 954.6 609.6 954.4 631.2C954.2 652.8 953.7 683.2 951.9 704.1C950.2 725.1 947.4 743.7 943.8 756.8C940.3 770.0 934.2 777.9 930.5 783.2C926.8 788.4 923.0 787.5 921.6 788.4L852.7 788.4C849.6 781.1 839.0 765.5 834.4 744.7C829.8 723.9 826.8 686.6 825.1 663.6C823.4 640.7 823.6 630.5 824.3 606.9C825.0 583.3 826.5 545.7 829.2 521.8C831.9 498.0 838.6 473.5 840.5 463.9Z"/></clipPath>
<pattern id="oh" width="5" height="7" patternUnits="userSpaceOnUse" patternTransform="rotate(8)"><rect width="5" height="7" fill="#cf6811"/><path d="M0,0 L2.500,7 L5,0" stroke="#a95209" stroke-width="1.2" fill="none"/></pattern>
<g><path d="M840.5 463.9L921.6 463.9C923.9 465.8 931.6 466.9 935.7 475.2C939.9 483.5 943.8 497.2 946.7 513.7C949.6 530.3 951.9 554.9 953.2 574.5C954.4 594.1 954.6 609.6 954.4 631.2C954.2 652.8 953.7 683.2 951.9 704.1C950.2 725.1 947.4 743.7 943.8 756.8C940.3 770.0 934.2 777.9 930.5 783.2C926.8 788.4 923.0 787.5 921.6 788.4L852.7 788.4C849.6 781.1 839.0 765.5 834.4 744.7C829.8 723.9 826.8 686.6 825.1 663.6C823.4 640.7 823.6 630.5 824.3 606.9C825.0 583.3 826.5 545.7 829.2 521.8C831.9 498.0 838.6 473.5 840.5 463.9Z" fill="#df7019"/><g clip-path="url(#ocl)">
<path d="M857.0 464.6L926.0 464.6M863.5 473.8L933.3 473.8M926.0 464.6L863.5 473.8M869.5 491.4L940.0 491.4M933.3 473.8L869.5 491.4M874.6 516.5L945.7 516.5M940.0 491.4L874.6 516.5M878.5 547.6L950.0 547.6M945.7 516.5L878.5 547.6M881.0 583.1L952.9 583.1M950.0 547.6L881.0 583.1M882.0 620.9L954.0 620.9M952.9 583.1L882.0 620.9M881.4 659.0L953.3 659.0M954.0 620.9L881.4 659.0M879.3 695.3L951.0 695.3M953.3 659.0L879.3 695.3M875.7 727.7L947.0 727.7M951.0 695.3L875.7 727.7M870.9 754.6L941.6 754.6M947.0 727.7L870.9 754.6M865.2 774.3L935.2 774.3M941.6 754.6L865.2 774.3M858.8 785.8L928.0 785.8M935.2 774.3L858.8 785.8" stroke="#8c4608" stroke-width="2.2" fill="none" opacity="0.9"/>
<pattern id="obh" width="3" height="6" patternUnits="userSpaceOnUse"><path d="M1,0 V4" stroke="#9a4c08" stroke-width="1"/></pattern>
<path d="M840.5 463.9L921.6 463.9C923.9 465.8 931.6 466.9 935.7 475.2C939.9 483.5 943.8 497.2 946.7 513.7C949.6 530.3 951.9 554.9 953.2 574.5C954.4 594.1 954.6 609.6 954.4 631.2C954.2 652.8 953.7 683.2 951.9 704.1C950.2 725.1 947.4 743.7 943.8 756.8C940.3 770.0 934.2 777.9 930.5 783.2C926.8 788.4 923.0 787.5 921.6 788.4L852.7 788.4C849.6 781.1 839.0 765.5 834.4 744.7C829.8 723.9 826.8 686.6 825.1 663.6C823.4 640.7 823.6 630.5 824.3 606.9C825.0 583.3 826.5 545.7 829.2 521.8C831.9 498.0 838.6 473.5 840.5 463.9Z" fill="url(#obh)" opacity="0.4"/>
<ellipse cx="853.4" cy="626" rx="28.6" ry="162.7" fill="#e37620"/>
<ellipse cx="848.4" cy="626" rx="23.6" ry="159.7" fill="url(#oh)"/>
<path d="M845 640L872.0 626.0M845 640L871.6 653.7M845 640L870.6 680.6M845 640L868.8 705.9M845 640L866.5 728.7M845 640L863.6 748.3M845 640L860.2 764.3M845 640L856.5 776.1M845 640L852.5 783.3M845 640L848.4 785.7M845 640L844.3 783.3M845 640L840.3 776.1M845 640L836.6 764.3M845 640L833.2 748.3M845 640L830.3 728.7M845 640L828.0 705.9M845 640L826.2 680.6M845 640L825.2 653.7M845 640L824.8 626.0M845 640L825.2 598.3M845 640L826.2 571.4M845 640L828.0 546.1M845 640L830.3 523.3M845 640L833.2 503.7M845 640L836.6 487.7M845 640L840.3 475.9M845 640L844.3 468.7M845 640L848.4 466.3M845 640L852.5 468.7M845 640L856.5 475.9M845 640L860.2 487.7M845 640L863.6 503.7M845 640L866.5 523.3M845 640L868.8 546.2M845 640L870.6 571.4M845 640L871.6 598.3" stroke="#a04e08" stroke-width="1" fill="none" opacity="0.5"/>
</g>
<path d="M840.5 463.9L921.6 463.9C923.9 465.8 931.6 466.9 935.7 475.2C939.9 483.5 943.8 497.2 946.7 513.7C949.6 530.3 951.9 554.9 953.2 574.5C954.4 594.1 954.6 609.6 954.4 631.2C954.2 652.8 953.7 683.2 951.9 704.1C950.2 725.1 947.4 743.7 943.8 756.8C940.3 770.0 934.2 777.9 930.5 783.2C926.8 788.4 923.0 787.5 921.6 788.4L852.7 788.4C849.6 781.1 839.0 765.5 834.4 744.7C829.8 723.9 826.8 686.6 825.1 663.6C823.4 640.7 823.6 630.5 824.3 606.9C825.0 583.3 826.5 545.7 829.2 521.8C831.9 498.0 838.6 473.5 840.5 463.9Z" fill="none" stroke="#b45c0e" stroke-width="1.6"/></g>
<polygon points="783,635.5 863,644 863,648 783,639.5" fill="#0080ff"/>
<g>
<polygon points="754.400,399 783,399 788.900,640 792.800,860 778,866.500 763,866.600 757.700,834.500 749,776 744,698 738.600,443.600" fill="#3b50d4"/>
<polygon points="754.400,399 738.600,443.600 744,698 749,776 757.700,834.500 763,866.600 767.500,866.600 757,399" fill="#3143b6"/>
<path d="M756.5,399 L767.5,866 M738.6,443.6 L753,443.6 M741,446 L752,640 L765,850 M744,446 L757,640 L768,850 M782,402 L760,440 L775,640 L790,850 M760,440 L770,760" stroke="#5266e4" stroke-width="1.4" fill="none" opacity="0.85"/>
<path d="M783,399 L788.900,640 L792.800,860" stroke="#3446c0" stroke-width="1.500" fill="none"/>
</g>
<polygon points="440,602 640,618.500 753,629 754,698 700,700.500 588,700 447,689" fill="#0080ff"/>
<clipPath id="rcl"><path d="M621.9 436.3L677.0 436.3C678.2 447.2 681.4 470.4 683.9 501.5C686.4 532.6 691.0 582.5 692.0 623.0C693.0 663.5 690.9 712.5 690.0 744.5C689.0 776.5 686.9 803.2 686.3 815.0L635.3 817.0C631.6 809.1 620.4 788.5 613.0 769.6C605.6 750.8 596.5 728.5 590.7 704.0C585.0 679.6 579.6 650.0 578.6 623.0C577.6 596.0 580.6 565.6 584.7 542.0C588.7 518.4 596.7 498.9 602.9 481.3C609.1 463.6 618.8 443.8 621.9 436.3Z"/></clipPath>
<g><path d="M621.9 436.3L677.0 436.3C678.2 447.2 681.4 470.4 683.9 501.5C686.4 532.6 691.0 582.5 692.0 623.0C693.0 663.5 690.9 712.5 690.0 744.5C689.0 776.5 686.9 803.2 686.3 815.0L635.3 817.0C631.6 809.1 620.4 788.5 613.0 769.6C605.6 750.8 596.5 728.5 590.7 704.0C585.0 679.6 579.6 650.0 578.6 623.0C577.6 596.0 580.6 565.6 584.7 542.0C588.7 518.4 596.7 498.9 602.9 481.3C609.1 463.6 618.8 443.8 621.9 436.3Z" fill="#e80000"/><g clip-path="url(#rcl)">
<polygon points="620,442 640,442 647,660 646,814 632,814 626,660" fill="#c60000"/>
<polygon points="640,442 672.500,442 678,659 685.500,814 646,814 647,660" fill="#8e0000"/>
<path d="M623.0 444.0L674.3 496.6M672.5 444.0L624.6 496.6M623.0 444.0L672.5 444.0M624.6 496.6L676.1 549.1M674.3 496.6L626.1 549.1M624.6 496.6L674.3 496.6M626.1 549.1L677.9 601.7M676.1 549.1L627.7 601.7M626.1 549.1L676.1 549.1M627.7 601.7L679.6 654.3M677.9 601.7L629.3 654.3M627.7 601.7L677.9 601.7M629.3 654.3L681.4 706.9M679.6 654.3L630.9 706.9M629.3 654.3L679.6 654.3M630.9 706.9L683.2 759.4M681.4 706.9L632.4 759.4M630.9 706.9L681.4 706.9M632.4 759.4L685.0 812.0M683.2 759.4L634.0 812.0M632.4 759.4L683.2 759.4" stroke="#e80000" stroke-width="3" fill="none"/>
<path d="M672.500,442 L678,659 L685.500,814" stroke="#e80000" stroke-width="2.500" fill="none"/>
<path d="M622.6 438 Q575.0 625 636.6 814M623.2 438 Q590.0 625 637.2 814M623.8 438 Q605.0 625 637.8 814" stroke="#c80000" stroke-width="1" fill="none" opacity="0.7"/>
</g></g>
<polygon points="384,601 400.600,598 414.500,598 440,601 452.500,600.500 441,606 447,688 390,684.300" fill="url(#gr)"/>
<polygon points="384,601 400.600,598 414.500,598 440,601 452.500,600.500 441,606 447,688 390,684.300" fill="none" stroke="#00f800" stroke-width="1.500"/><path d="M390,684.800 L446,688.500" stroke="#0080ff" stroke-width="1.500"/>
<polygon points="437,602 442,603 448,688.500 442,688" fill="#00f800"/>
<g opacity="0.18"><line x1="824" y1="671.2" x2="1135" y2="776.5" stroke="#ff2a00" stroke-width="3.5" clip-path="url(#ocl)"/><line x1="824" y1="671.2" x2="1135" y2="776.5" stroke="#ff2a00" stroke-width="3.5" clip-path="url(#ycl)"/></g>
<line x1="141.3" y1="668.5" x2="1702.7" y2="1136.1" stroke="#84020c" stroke-width="4.94" />
<line x1="616.4" y1="1171.0" x2="1702.6" y2="779.8" stroke="#ff000c" stroke-width="4.85" />
<line x1="1581.0" y1="928.2" x2="1647.1" y2="263.0" stroke="#84020c" stroke-width="5.13" />
<line x1="1581.0" y1="928.2" x2="750.0" y2="1170.7" stroke="#84020c" stroke-width="4.95" />
<line x1="1581.0" y1="928.2" x2="1701.9" y2="845.3" stroke="#84020c" stroke-width="4.27" />
<line x1="1581.0" y1="928.2" x2="1702.5" y2="982.9" stroke="#84020c" stroke-width="4.71" />
<circle cx="1581" cy="928.2" r="3" fill="#c00008"/>
<line x1="141.0" y1="1121.8" x2="1703.0" y2="1005.6" stroke="#ff000c" stroke-width="5.14" />
<line x1="141.0" y1="1121.8" x2="1703.0" y2="1005.6" stroke="#ffd6d6" stroke-width="1.4" stroke-dasharray="1.4 6 1.4 4 1.4 8 1.4 5"/>
<polygon points="1258,689 1700,723.5 1700,737 1258,698" fill="#0080ff"/>
<line x1="1420" y1="707" x2="1700" y2="731" stroke="#083a80" stroke-width="1" opacity="0.6"/>
</svg>
<svg class="abs" style="left:1782px;top:1214px" width="14" height="14" viewBox="0 0 14 14" fill="#b4b4b4"><rect x="3" y="12" width="1.2" height="1.2"/><rect x="6" y="9" width="1.2" height="1.2"/><rect x="6" y="12" width="1.2" height="1.2"/><rect x="9" y="6" width="1.2" height="1.2"/><rect x="9" y="9" width="1.2" height="1.2"/><rect x="9" y="12" width="1.2" height="1.2"/><rect x="12" y="3" width="1.2" height="1.2"/><rect x="12" y="6" width="1.2" height="1.2"/><rect x="12" y="9" width="1.2" height="1.2"/><rect x="12" y="12" width="1.2" height="1.2"/></svg>
<svg class="abs" style="left:126px;top:711px" width="4" height="19" viewBox="0 0 4 19" fill="#a8a8a8"><rect x="1" y="1" width="1" height="1"/><rect x="1" y="4" width="1" height="1"/><rect x="1" y="7" width="1" height="1"/><rect x="1" y="10" width="1" height="1"/><rect x="1" y="13" width="1" height="1"/><rect x="1" y="16" width="1" height="1"/></svg>
<svg class="abs" style="left:20px;top:255px" width="110" height="365" viewBox="20 255 110 365">
<defs><linearGradient id="subg" x1="0" y1="0" x2="0" y2="1"><stop offset="0" stop-color="#1c1ce6"/><stop offset="0.55" stop-color="#2222a8"/><stop offset="1" stop-color="#00002a"/></linearGradient></defs>
<rect x="54" y="260.700" width="40.500" height="1.300" fill="#c9b7a2"/><rect x="54" y="284.700" width="40.500" height="1.300" fill="#c9b7a2"/>
<rect x="55.500" y="263.8" width="37.800" height="5.300" fill="#3838ff"/>
<rect x="55.500" y="271" width="37.800" height="5.300" fill="#3838ff"/>
<rect x="55.500" y="278.3" width="37.800" height="5.300" fill="#3838ff"/>
<path d="M62.800,342.300 H74.800 Q82.500,358 74,374 H62.500 Q71,358 62.800,342.300 Z" fill="none" stroke="#222" stroke-width="1.300"/>
<rect x="60.800" y="426" width="29.400" height="29.200" fill="url(#subg)"/>
<g fill="#fff" opacity="0.22"><ellipse cx="72" cy="437" rx="6" ry="5"/><ellipse cx="81" cy="440" rx="6" ry="6"/><ellipse cx="70" cy="446" rx="7" ry="4"/><ellipse cx="80" cy="448" rx="6" ry="4"/><ellipse cx="76" cy="438" rx="2" ry="5"/></g>
<path d="M66,426 V455 M75.500,426 V455 M85,426 V455" stroke="#fff" stroke-width="0.6" opacity="0.35"/>
<path d="M58.800,424.500 V457 H92" stroke="#9a9a9a" stroke-width="1" fill="none"/><path d="M89.500,455.800 L92.500,457 L89.500,458.200 Z M57.800,427 L58.800,424 L59.800,427 Z" fill="#333"/>
<text x="53.500" y="441.500" font-size="7" fill="#444" font-family="DejaVu Sans, Liberation Sans, sans-serif">x</text><text x="73" y="462.800" font-size="7" fill="#444" font-family="DejaVu Sans, Liberation Sans, sans-serif">z</text>
<rect x="66.9" y="544.9" width="13.400" height="12" fill="none" stroke="#333" stroke-width="1.100"/>
<rect x="82" y="544.9" width="13.400" height="12" fill="none" stroke="#333" stroke-width="1.100"/>
<rect x="66.9" y="559.6" width="13.400" height="12" fill="none" stroke="#333" stroke-width="1.100"/>
<rect x="82" y="559.6" width="13.400" height="12" fill="none" stroke="#333" stroke-width="1.100"/>
<path d="M57,585.200 L30.500,597.500 L37,600.500 L39.500,605.300 L42.500,601.800 L52.800,605 Z M57,585.200 L37,600.500 M57,585.200 L42.500,601.800" fill="none" stroke="#222" stroke-width="1" stroke-linejoin="round"/>
<ellipse cx="80.500" cy="596.300" rx="7.300" ry="2.600" fill="none" stroke="#2a2aff" stroke-width="1.300"/>
<path d="M80.500,607.500 V587" stroke="#111" stroke-width="1.100"/><path d="M80.500,584.300 L82.300,590.500 H78.700 Z" fill="#111"/>
</svg>
<div class="tlab" style="left:74.5px;top:300px">Layer<br>editor</div>
<div class="tlab" style="left:74.5px;top:384px">S<br>plane</div>
<div class="tlab" style="left:74.5px;top:468px">Substrate<br>xz-size</div>
<div class="abs" style="left:27.7px;top:502px;font-size:27px;line-height:32px;white-space:nowrap;letter-spacing:-0.6px">xy</div>
<div class="abs" style="left:65.6px;top:502px;font-size:27px;line-height:32px;white-space:nowrap;letter-spacing:-0.6px">yz</div>
<div class="abs" style="left:27.7px;top:539px;font-size:27px;line-height:32px;white-space:nowrap;letter-spacing:-0.6px">xz</div>
<svg class="abs" style="left:1705px;top:270px" width="60" height="210" viewBox="1705 270 60 210">
<defs><linearGradient id="arg" x1="0" y1="0" x2="0" y2="1"><stop offset="0" stop-color="#7aa0d8"/><stop offset="1" stop-color="#2f5fa8"/></linearGradient>
<g id="rcube"><path d="M1713.500,281.500 H1732.500 V302 H1713.500 Z M1718.500,276 H1737.800 V296 H1718.500 Z M1713.500,281.500 L1718.500,276 M1732.500,281.500 L1737.800,276 M1713.500,302 L1718.500,296 M1732.500,302 L1737.800,296" fill="none" stroke="#ff3030" stroke-width="1.500"/>
<path d="M1713.800,288.500 C1714,283.500 1720,281.800 1723,284.500 C1724.500,286 1724.800,288 1724.800,289.500 H1729 L1723,296 L1717,289.500 H1720.500 C1720.500,287 1719.500,285.500 1717.500,285.500 C1715.500,285.500 1714.300,287 1713.800,288.500 Z" fill="url(#arg)"/></g></defs>
<use href="#rcube" y="0"/>
<use href="#rcube" y="84"/>
<use href="#rcube" y="168"/>
</svg>
<div class="abs" style="left:1738px;top:292px;font-size:19px;line-height:22px">x</div>
<div class="tlab" style="left:1731px;top:318px">Rotate<br>x</div>
<div class="abs" style="left:1738px;top:376px;font-size:19px;line-height:22px">z</div>
<div class="tlab" style="left:1731px;top:402px">Rotate<br>z</div>
<div class="abs" style="left:1738px;top:460px;font-size:19px;line-height:22px">y</div>
<div class="tlab" style="left:1731px;top:486px">Rotate<br>y</div>
<div class="abs" style="left:11px;top:1211px;font-size:13px">/home/rod/oghma/oghma8.0</div>
</body></html>
